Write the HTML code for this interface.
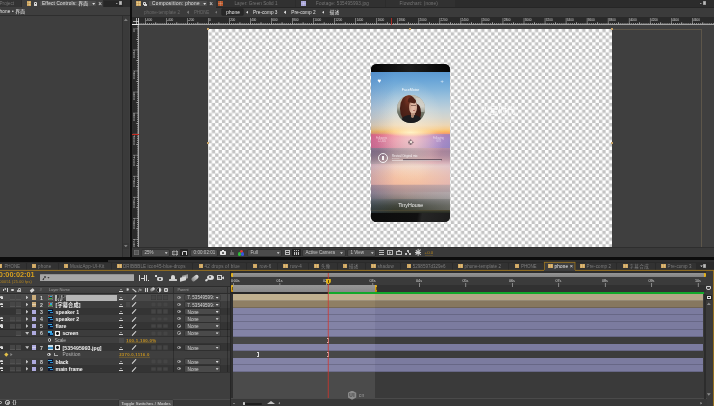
<!DOCTYPE html>
<html><head><meta charset="utf-8"><title>After Effects - phone</title>
<style>
html,body{margin:0;padding:0;background:#3e3e3e;}
#r{position:relative;width:714px;height:406px;overflow:hidden;background:#3e3e3e;font-family:"Liberation Sans","Noto Sans CJK SC",sans-serif;will-change:transform;}
#r div,#r span,#r svg{position:absolute;display:block;white-space:nowrap;}
</style></head><body><div id="r">
<div style="left:0.00px;top:0.00px;width:130.00px;height:257.50px;background:#3e3e3e;"></div>
<div style="left:0.00px;top:0.00px;width:130.00px;height:7.00px;background:#2c2c2c;"></div>
<div style="left:0.00px;top:0.00px;width:21.00px;height:6.60px;background:#333;"></div>
<span id="t0" style="left:-0.60px;top:0px;font-size:4.6px;line-height:8px;color:#777;font-weight:normal;letter-spacing:0.070px;">Project</span>
<div style="left:22.00px;top:0.00px;width:81.00px;height:8.00px;background:#3e3e3e;"></div>
<div style="left:26.50px;top:1.40px;width:4.50px;height:4.50px;background:#c8a868;"></div>
<div style="left:26.50px;top:1.40px;width:4.50px;height:4.50px;background:#e4c88c;"></div>
<div style="left:28px;top:1.40px;width:1px;height:4.50px;background:rgba(176,120,40,0.303);"></div>
<div style="left:29px;top:1.40px;width:1px;height:4.50px;background:rgba(176,120,40,0.028);"></div>
<div style="left:26.50px;top:3px;width:4.50px;height:1px;background:rgba(176,120,40,0.330);"></div>
<div style="left:26.50px;top:1.40px;width:4.5px;height:4.5px;box-shadow:inset 0 0 0 0.5px rgba(176,120,40,.55);"></div>
<div style="left:34.30px;top:3.80px;width:3.20px;height:2.10px;background:#d6d6d6;border-radius:0.3px;"></div>
<div style="left:33.60px;top:2.20px;width:1.0px;height:1.8px;border:0.6px solid #d6d6d6;border-bottom:none;border-radius:1.1px 1.1px 0 0;"></div>
<div style="left:40.00px;top:0.60px;width:56.00px;height:5.60px;background:#4c4c4c;border-radius:0.8px;"></div>
<span id="t1" style="left:42.00px;top:0px;font-size:4.7px;line-height:8px;color:#e6e6e6;font-weight:normal;letter-spacing:0.177px;">Effect Controls: 界面</span>
<div style="left:92.00px;top:2.80px;width:3.40px;height:2.12px;background:#ddd;clip-path:polygon(0 0,100% 0,50% 100%);"></div>
<span id="t2" style="left:98.20px;top:0px;font-size:6.4px;line-height:8px;color:#e0e0e0;font-weight:normal;">×</span>
<div style="left:103.50px;top:0.50px;width:19.00px;height:6.00px;background:#262626;"></div>
<div style="left:115.50px;top:2.50px;width:2.60px;height:1.62px;background:#ddd;clip-path:polygon(0 0,100% 0,50% 100%);"></div>
<div style="left:118.50px;top:1.30px;width:3.00px;height:4.00px;background:#bdbdbd;box-shadow:inset 0 0 0 0.5px #888;"></div>
<span id="t3" style="left:-0.50px;top:8px;font-size:4.7px;line-height:8px;color:#e6e6e6;font-weight:normal;letter-spacing:0.160px;">hone • 界面</span>
<div style="left:0.00px;top:15.40px;width:130.00px;height:0.90px;background:#2e2e2e;"></div>
<div style="left:122.20px;top:16.30px;width:7.20px;height:241.00px;background:#3a3a3a;"></div>
<div style="left:122.20px;top:16.30px;width:0.60px;height:241.00px;background:#2f2f2f;"></div>
<div style="left:123.80px;top:18.40px;width:4.00px;height:2.70px;background:#7c7c7c;clip-path:polygon(0 100%,100% 100%,50% 0);"></div>
<div style="left:122.80px;top:243.00px;width:6.60px;height:6.40px;background:#363636;"></div>
<div style="left:123.80px;top:244.80px;width:4.00px;height:2.70px;background:#7c7c7c;clip-path:polygon(0 0,100% 0,50% 100%);"></div>
<div style="left:129.60px;top:0.00px;width:2.00px;height:258.00px;background:#0f0f0f;"></div>
<div style="left:131.60px;top:0.00px;width:582.40px;height:257.50px;background:#3e3e3e;"></div>
<div style="left:131.60px;top:0.00px;width:582.40px;height:7.00px;background:#2c2c2c;"></div>
<div style="left:131.60px;top:0.00px;width:84.00px;height:8.00px;background:#3c3c3c;"></div>
<div style="left:136.30px;top:1.40px;width:4.50px;height:4.50px;background:#c8a868;"></div>
<div style="left:136.30px;top:1.40px;width:4.50px;height:4.50px;background:#e4c88c;"></div>
<div style="left:138px;top:1.40px;width:1px;height:4.50px;background:rgba(176,120,40,0.330);"></div>
<div style="left:136.30px;top:3px;width:4.50px;height:1px;background:rgba(176,120,40,0.330);"></div>
<div style="left:136.30px;top:1.40px;width:4.5px;height:4.5px;box-shadow:inset 0 0 0 0.5px rgba(176,120,40,.55);"></div>
<div style="left:143.70px;top:3.80px;width:3.20px;height:2.10px;background:#d6d6d6;border-radius:0.3px;"></div>
<div style="left:143.00px;top:2.20px;width:1.0px;height:1.8px;border:0.6px solid #d6d6d6;border-bottom:none;border-radius:1.1px 1.1px 0 0;"></div>
<div style="left:149.00px;top:0.60px;width:58.00px;height:5.60px;background:#4c4c4c;border-radius:0.8px;"></div>
<span id="t4" style="left:152.00px;top:0px;font-size:4.7px;line-height:8px;color:#e6e6e6;font-weight:normal;letter-spacing:0.350px;">Composition: phone</span>
<div style="left:203.00px;top:2.80px;width:3.40px;height:2.12px;background:#ddd;clip-path:polygon(0 0,100% 0,50% 100%);"></div>
<span id="t5" style="left:209.20px;top:0px;font-size:6.4px;line-height:8px;color:#e0e0e0;font-weight:normal;">×</span>
<div style="left:216.20px;top:0.40px;width:78.80px;height:6.20px;background:#313131;"></div>
<div style="left:295.80px;top:0.40px;width:89.70px;height:6.20px;background:#313131;"></div>
<div style="left:386.30px;top:0.40px;width:68.70px;height:6.20px;background:#313131;"></div>
<div style="left:218.20px;top:1.40px;width:4.50px;height:4.50px;background:#b5562a;"></div>
<div style="left:220px;top:1.40px;width:1px;height:4.50px;background:rgba(255,255,255,0.180);"></div>
<div style="left:218.20px;top:3px;width:4.50px;height:1px;background:rgba(255,255,255,0.180);"></div>
<span id="t6" style="left:234.50px;top:0px;font-size:4.6px;line-height:8px;color:#777;font-weight:normal;letter-spacing:0.043px;">Layer: Green Solid 1</span>
<div style="left:301.40px;top:1.40px;width:4.50px;height:4.50px;background:#a9a5d8;"></div>
<div style="left:303px;top:1.40px;width:1px;height:4.50px;background:rgba(255,255,255,0.180);"></div>
<div style="left:301.40px;top:3px;width:4.50px;height:1px;background:rgba(255,255,255,0.180);"></div>
<span id="t7" style="left:316.00px;top:0px;font-size:4.6px;line-height:8px;color:#777;font-weight:normal;letter-spacing:0.145px;">Footage: 535495993.jpg</span>
<span id="t8" style="left:399.60px;top:0px;font-size:4.6px;line-height:8px;color:#777;font-weight:normal;letter-spacing:0.155px;">Flowchart: (none)</span>
<div style="left:699.50px;top:2.50px;width:2.60px;height:1.62px;background:#ddd;clip-path:polygon(0 0,100% 0,50% 100%);"></div>
<div style="left:702.50px;top:1.30px;width:3.00px;height:4.00px;background:#bdbdbd;box-shadow:inset 0 0 0 0.5px #888;"></div>
<div style="left:131.60px;top:6.80px;width:582.40px;height:0.70px;background:#262626;"></div>
<div style="left:131.60px;top:0.00px;width:84.00px;height:8.00px;background:#3c3c3c;"></div>
<div style="left:136.30px;top:1.40px;width:4.50px;height:4.50px;background:#c8a868;"></div>
<div style="left:136.30px;top:1.40px;width:4.50px;height:4.50px;background:#e4c88c;"></div>
<div style="left:138px;top:1.40px;width:1px;height:4.50px;background:rgba(176,120,40,0.330);"></div>
<div style="left:136.30px;top:3px;width:4.50px;height:1px;background:rgba(176,120,40,0.330);"></div>
<div style="left:136.30px;top:1.40px;width:4.5px;height:4.5px;box-shadow:inset 0 0 0 0.5px rgba(176,120,40,.55);"></div>
<div style="left:143.70px;top:3.80px;width:3.20px;height:2.10px;background:#d6d6d6;border-radius:0.3px;"></div>
<div style="left:143.00px;top:2.20px;width:1.0px;height:1.8px;border:0.6px solid #d6d6d6;border-bottom:none;border-radius:1.1px 1.1px 0 0;"></div>
<div style="left:149.00px;top:0.60px;width:58.00px;height:5.60px;background:#4c4c4c;border-radius:0.8px;"></div>
<span id="t9" style="left:152.00px;top:0px;font-size:4.7px;line-height:8px;color:#e6e6e6;font-weight:normal;letter-spacing:0.350px;">Composition: phone</span>
<div style="left:203.00px;top:2.80px;width:3.40px;height:2.12px;background:#ddd;clip-path:polygon(0 0,100% 0,50% 100%);"></div>
<span id="t10" style="left:209.20px;top:0px;font-size:6.4px;line-height:8px;color:#e0e0e0;font-weight:normal;">×</span>
<div style="left:131.60px;top:7.50px;width:582.40px;height:9.70px;background:#3b3b3b;"></div>
<span id="t11" style="left:144.00px;top:9px;font-size:4.6px;line-height:8px;color:#6a6a6a;font-weight:normal;letter-spacing:0.015px;">phone-template 2</span>
<div style="left:186.60px;top:10.40px;width:2.43px;height:3.60px;background:#777;clip-path:polygon(100% 0,0 50%,100% 100%);"></div>
<span id="t12" style="left:194.00px;top:9px;font-size:4.6px;line-height:8px;color:#6a6a6a;font-weight:normal;letter-spacing:-0.269px;">PHONE</span>
<div style="left:215.00px;top:10.40px;width:2.43px;height:3.60px;background:#777;clip-path:polygon(100% 0,0 50%,100% 100%);"></div>
<div style="left:222.40px;top:8.80px;width:21.00px;height:6.70px;background:#272727;border-radius:0.5px;box-shadow:0 0 0 0.5px #1c1c1c;"></div>
<span id="t13" style="left:226.30px;top:9px;font-size:4.7px;line-height:8px;color:#f0f0f0;font-weight:normal;letter-spacing:0.131px;">phone</span>
<div style="left:246.00px;top:10.40px;width:2.43px;height:3.60px;background:#ddd;clip-path:polygon(100% 0,0 50%,100% 100%);"></div>
<span id="t14" style="left:253.00px;top:9px;font-size:4.7px;line-height:8px;color:#e0e0e0;font-weight:normal;letter-spacing:0.027px;">Pre-comp 3</span>
<div style="left:283.60px;top:10.40px;width:2.43px;height:3.60px;background:#ddd;clip-path:polygon(100% 0,0 50%,100% 100%);"></div>
<span id="t15" style="left:291.30px;top:9px;font-size:4.7px;line-height:8px;color:#e0e0e0;font-weight:normal;letter-spacing:-0.003px;">Pre-comp 2</span>
<div style="left:322.00px;top:10.40px;width:2.43px;height:3.60px;background:#ddd;clip-path:polygon(100% 0,0 50%,100% 100%);"></div>
<span id="t16" style="left:329.40px;top:9px;font-size:4.7px;line-height:8px;color:#e0e0e0;font-weight:normal;letter-spacing:0.305px;">描述</span>
<div style="left:131.60px;top:17.30px;width:582.40px;height:7.90px;background:#2a2a2a;"></div>
<div style="left:131.60px;top:25.20px;width:7.60px;height:222.30px;background:#2a2a2a;"></div>
<div style="left:139.20px;top:25.20px;width:574.80px;height:222.30px;background:#3f3f3f;"></div>
<div style="left:139px;top:23px;width:575px;height:1px;background:repeating-linear-gradient(90deg,rgba(230,230,230,.55) -0.032px,rgba(230,230,230,0) 1.020px,rgba(230,230,230,.55) 2.072px);"></div>
<div style="left:139.00px;top:24px;width:575.00px;height:1px;background:rgba(232,232,232,0.640);"></div>
<div style="left:144px;top:18.00px;width:1px;height:6.00px;background:rgba(215,215,215,0.015);"></div>
<div style="left:145px;top:18.00px;width:1px;height:6.00px;background:rgba(215,215,215,0.435);"></div>
<span id="t17" style="left:145.98px;top:16px;font-size:3.1px;line-height:8px;color:#d8d8d8;font-weight:normal;">-600</span>
<div style="left:155px;top:22.00px;width:1px;height:2.00px;background:rgba(225,225,225,0.350);"></div>
<div style="left:156px;top:22.00px;width:1px;height:2.00px;background:rgba(225,225,225,0.070);"></div>
<div style="left:166px;top:18.00px;width:1px;height:6.00px;background:rgba(215,215,215,0.450);"></div>
<span id="t18" style="left:167.02px;top:16px;font-size:3.1px;line-height:8px;color:#d8d8d8;font-weight:normal;">-400</span>
<div style="left:176px;top:22.00px;width:1px;height:2.00px;background:rgba(225,225,225,0.322);"></div>
<div style="left:177px;top:22.00px;width:1px;height:2.00px;background:rgba(225,225,225,0.098);"></div>
<div style="left:187px;top:18.00px;width:1px;height:6.00px;background:rgba(215,215,215,0.450);"></div>
<span id="t19" style="left:188.06px;top:16px;font-size:3.1px;line-height:8px;color:#d8d8d8;font-weight:normal;">-200</span>
<div style="left:197px;top:22.00px;width:1px;height:2.00px;background:rgba(225,225,225,0.294);"></div>
<div style="left:198px;top:22.00px;width:1px;height:2.00px;background:rgba(225,225,225,0.126);"></div>
<div style="left:208px;top:18.00px;width:1px;height:6.00px;background:rgba(215,215,215,0.450);"></div>
<span id="t20" style="left:209.10px;top:16px;font-size:3.1px;line-height:8px;color:#d8d8d8;font-weight:normal;">0</span>
<div style="left:218px;top:22.00px;width:1px;height:2.00px;background:rgba(225,225,225,0.266);"></div>
<div style="left:219px;top:22.00px;width:1px;height:2.00px;background:rgba(225,225,225,0.154);"></div>
<div style="left:229px;top:18.00px;width:1px;height:6.00px;background:rgba(215,215,215,0.450);"></div>
<span id="t21" style="left:230.14px;top:16px;font-size:3.1px;line-height:8px;color:#d8d8d8;font-weight:normal;">200</span>
<div style="left:239px;top:22.00px;width:1px;height:2.00px;background:rgba(225,225,225,0.238);"></div>
<div style="left:240px;top:22.00px;width:1px;height:2.00px;background:rgba(225,225,225,0.182);"></div>
<div style="left:250px;top:18.00px;width:1px;height:6.00px;background:rgba(215,215,215,0.450);"></div>
<span id="t22" style="left:251.18px;top:16px;font-size:3.1px;line-height:8px;color:#d8d8d8;font-weight:normal;">400</span>
<div style="left:260px;top:22.00px;width:1px;height:2.00px;background:rgba(225,225,225,0.210);"></div>
<div style="left:261px;top:22.00px;width:1px;height:2.00px;background:rgba(225,225,225,0.210);"></div>
<div style="left:271px;top:18.00px;width:1px;height:6.00px;background:rgba(215,215,215,0.450);"></div>
<span id="t23" style="left:272.22px;top:16px;font-size:3.1px;line-height:8px;color:#d8d8d8;font-weight:normal;">600</span>
<div style="left:281px;top:22.00px;width:1px;height:2.00px;background:rgba(225,225,225,0.182);"></div>
<div style="left:282px;top:22.00px;width:1px;height:2.00px;background:rgba(225,225,225,0.238);"></div>
<div style="left:292px;top:18.00px;width:1px;height:6.00px;background:rgba(215,215,215,0.450);"></div>
<span id="t24" style="left:293.26px;top:16px;font-size:3.1px;line-height:8px;color:#d8d8d8;font-weight:normal;">800</span>
<div style="left:302px;top:22.00px;width:1px;height:2.00px;background:rgba(225,225,225,0.154);"></div>
<div style="left:303px;top:22.00px;width:1px;height:2.00px;background:rgba(225,225,225,0.266);"></div>
<div style="left:313px;top:18.00px;width:1px;height:6.00px;background:rgba(215,215,215,0.450);"></div>
<span id="t25" style="left:314.30px;top:16px;font-size:3.1px;line-height:8px;color:#d8d8d8;font-weight:normal;">1000</span>
<div style="left:323px;top:22.00px;width:1px;height:2.00px;background:rgba(225,225,225,0.126);"></div>
<div style="left:324px;top:22.00px;width:1px;height:2.00px;background:rgba(225,225,225,0.294);"></div>
<div style="left:334px;top:18.00px;width:1px;height:6.00px;background:rgba(215,215,215,0.450);"></div>
<span id="t26" style="left:335.34px;top:16px;font-size:3.1px;line-height:8px;color:#d8d8d8;font-weight:normal;">1200</span>
<div style="left:344px;top:22.00px;width:1px;height:2.00px;background:rgba(225,225,225,0.098);"></div>
<div style="left:345px;top:22.00px;width:1px;height:2.00px;background:rgba(225,225,225,0.322);"></div>
<div style="left:355px;top:18.00px;width:1px;height:6.00px;background:rgba(215,215,215,0.450);"></div>
<span id="t27" style="left:356.38px;top:16px;font-size:3.1px;line-height:8px;color:#d8d8d8;font-weight:normal;">1400</span>
<div style="left:365px;top:22.00px;width:1px;height:2.00px;background:rgba(225,225,225,0.070);"></div>
<div style="left:366px;top:22.00px;width:1px;height:2.00px;background:rgba(225,225,225,0.350);"></div>
<div style="left:376px;top:18.00px;width:1px;height:6.00px;background:rgba(215,215,215,0.435);"></div>
<div style="left:377px;top:18.00px;width:1px;height:6.00px;background:rgba(215,215,215,0.015);"></div>
<span id="t28" style="left:377.42px;top:16px;font-size:3.1px;line-height:8px;color:#d8d8d8;font-weight:normal;">1600</span>
<div style="left:386px;top:22.00px;width:1px;height:2.00px;background:rgba(225,225,225,0.042);"></div>
<div style="left:387px;top:22.00px;width:1px;height:2.00px;background:rgba(225,225,225,0.378);"></div>
<div style="left:397px;top:18.00px;width:1px;height:6.00px;background:rgba(215,215,215,0.405);"></div>
<div style="left:398px;top:18.00px;width:1px;height:6.00px;background:rgba(215,215,215,0.045);"></div>
<span id="t29" style="left:398.46px;top:16px;font-size:3.1px;line-height:8px;color:#d8d8d8;font-weight:normal;">1800</span>
<div style="left:407px;top:22.00px;width:1px;height:2.00px;background:rgba(225,225,225,0.014);"></div>
<div style="left:408px;top:22.00px;width:1px;height:2.00px;background:rgba(225,225,225,0.406);"></div>
<div style="left:418px;top:18.00px;width:1px;height:6.00px;background:rgba(215,215,215,0.375);"></div>
<div style="left:419px;top:18.00px;width:1px;height:6.00px;background:rgba(215,215,215,0.075);"></div>
<span id="t30" style="left:419.50px;top:16px;font-size:3.1px;line-height:8px;color:#d8d8d8;font-weight:normal;">2000</span>
<div style="left:429px;top:22.00px;width:1px;height:2.00px;background:rgba(225,225,225,0.420);"></div>
<div style="left:439px;top:18.00px;width:1px;height:6.00px;background:rgba(215,215,215,0.345);"></div>
<div style="left:440px;top:18.00px;width:1px;height:6.00px;background:rgba(215,215,215,0.105);"></div>
<span id="t31" style="left:440.54px;top:16px;font-size:3.1px;line-height:8px;color:#d8d8d8;font-weight:normal;">2200</span>
<div style="left:450px;top:22.00px;width:1px;height:2.00px;background:rgba(225,225,225,0.420);"></div>
<div style="left:460px;top:18.00px;width:1px;height:6.00px;background:rgba(215,215,215,0.315);"></div>
<div style="left:461px;top:18.00px;width:1px;height:6.00px;background:rgba(215,215,215,0.135);"></div>
<span id="t32" style="left:461.58px;top:16px;font-size:3.1px;line-height:8px;color:#d8d8d8;font-weight:normal;">2400</span>
<div style="left:471px;top:22.00px;width:1px;height:2.00px;background:rgba(225,225,225,0.420);"></div>
<div style="left:481px;top:18.00px;width:1px;height:6.00px;background:rgba(215,215,215,0.285);"></div>
<div style="left:482px;top:18.00px;width:1px;height:6.00px;background:rgba(215,215,215,0.165);"></div>
<span id="t33" style="left:482.62px;top:16px;font-size:3.1px;line-height:8px;color:#d8d8d8;font-weight:normal;">2600</span>
<div style="left:492px;top:22.00px;width:1px;height:2.00px;background:rgba(225,225,225,0.420);"></div>
<div style="left:502px;top:18.00px;width:1px;height:6.00px;background:rgba(215,215,215,0.255);"></div>
<div style="left:503px;top:18.00px;width:1px;height:6.00px;background:rgba(215,215,215,0.195);"></div>
<span id="t34" style="left:503.66px;top:16px;font-size:3.1px;line-height:8px;color:#d8d8d8;font-weight:normal;">2800</span>
<div style="left:513px;top:22.00px;width:1px;height:2.00px;background:rgba(225,225,225,0.420);"></div>
<div style="left:523px;top:18.00px;width:1px;height:6.00px;background:rgba(215,215,215,0.225);"></div>
<div style="left:524px;top:18.00px;width:1px;height:6.00px;background:rgba(215,215,215,0.225);"></div>
<span id="t35" style="left:524.70px;top:16px;font-size:3.1px;line-height:8px;color:#d8d8d8;font-weight:normal;">3000</span>
<div style="left:534px;top:22.00px;width:1px;height:2.00px;background:rgba(225,225,225,0.420);"></div>
<div style="left:544px;top:18.00px;width:1px;height:6.00px;background:rgba(215,215,215,0.195);"></div>
<div style="left:545px;top:18.00px;width:1px;height:6.00px;background:rgba(215,215,215,0.255);"></div>
<span id="t36" style="left:545.74px;top:16px;font-size:3.1px;line-height:8px;color:#d8d8d8;font-weight:normal;">3200</span>
<div style="left:555px;top:22.00px;width:1px;height:2.00px;background:rgba(225,225,225,0.420);"></div>
<div style="left:565px;top:18.00px;width:1px;height:6.00px;background:rgba(215,215,215,0.165);"></div>
<div style="left:566px;top:18.00px;width:1px;height:6.00px;background:rgba(215,215,215,0.285);"></div>
<span id="t37" style="left:566.78px;top:16px;font-size:3.1px;line-height:8px;color:#d8d8d8;font-weight:normal;">3400</span>
<div style="left:576px;top:22.00px;width:1px;height:2.00px;background:rgba(225,225,225,0.420);"></div>
<div style="left:586px;top:18.00px;width:1px;height:6.00px;background:rgba(215,215,215,0.135);"></div>
<div style="left:587px;top:18.00px;width:1px;height:6.00px;background:rgba(215,215,215,0.315);"></div>
<span id="t38" style="left:587.82px;top:16px;font-size:3.1px;line-height:8px;color:#d8d8d8;font-weight:normal;">3600</span>
<div style="left:597px;top:22.00px;width:1px;height:2.00px;background:rgba(225,225,225,0.420);"></div>
<div style="left:607px;top:18.00px;width:1px;height:6.00px;background:rgba(215,215,215,0.105);"></div>
<div style="left:608px;top:18.00px;width:1px;height:6.00px;background:rgba(215,215,215,0.345);"></div>
<span id="t39" style="left:608.86px;top:16px;font-size:3.1px;line-height:8px;color:#d8d8d8;font-weight:normal;">3800</span>
<div style="left:618px;top:22.00px;width:1px;height:2.00px;background:rgba(225,225,225,0.420);"></div>
<div style="left:628px;top:18.00px;width:1px;height:6.00px;background:rgba(215,215,215,0.075);"></div>
<div style="left:629px;top:18.00px;width:1px;height:6.00px;background:rgba(215,215,215,0.375);"></div>
<span id="t40" style="left:629.90px;top:16px;font-size:3.1px;line-height:8px;color:#d8d8d8;font-weight:normal;">4000</span>
<div style="left:639px;top:22.00px;width:1px;height:2.00px;background:rgba(225,225,225,0.406);"></div>
<div style="left:640px;top:22.00px;width:1px;height:2.00px;background:rgba(225,225,225,0.014);"></div>
<div style="left:649px;top:18.00px;width:1px;height:6.00px;background:rgba(215,215,215,0.045);"></div>
<div style="left:650px;top:18.00px;width:1px;height:6.00px;background:rgba(215,215,215,0.405);"></div>
<span id="t41" style="left:650.94px;top:16px;font-size:3.1px;line-height:8px;color:#d8d8d8;font-weight:normal;">4200</span>
<div style="left:660px;top:22.00px;width:1px;height:2.00px;background:rgba(225,225,225,0.378);"></div>
<div style="left:661px;top:22.00px;width:1px;height:2.00px;background:rgba(225,225,225,0.042);"></div>
<div style="left:671px;top:18.00px;width:1px;height:6.00px;background:rgba(215,215,215,0.435);"></div>
<span id="t42" style="left:671.98px;top:16px;font-size:3.1px;line-height:8px;color:#d8d8d8;font-weight:normal;">4400</span>
<div style="left:681px;top:22.00px;width:1px;height:2.00px;background:rgba(225,225,225,0.350);"></div>
<div style="left:682px;top:22.00px;width:1px;height:2.00px;background:rgba(225,225,225,0.070);"></div>
<div style="left:692px;top:18.00px;width:1px;height:6.00px;background:rgba(215,215,215,0.450);"></div>
<span id="t43" style="left:693.02px;top:16px;font-size:3.1px;line-height:8px;color:#d8d8d8;font-weight:normal;">4600</span>
<div style="left:702px;top:22.00px;width:1px;height:2.00px;background:rgba(225,225,225,0.322);"></div>
<div style="left:703px;top:22.00px;width:1px;height:2.00px;background:rgba(225,225,225,0.098);"></div>
<div style="left:137px;top:25px;width:1px;height:222.5px;background:repeating-linear-gradient(180deg,rgba(230,230,230,.55) -0.308px,rgba(230,230,230,0) 0.744px,rgba(230,230,230,.55) 1.796px);"></div>
<div style="left:138px;top:25.00px;width:1px;height:222.50px;background:rgba(232,232,232,0.640);"></div>
<div style="left:133.00px;top:28px;width:5.40px;height:1px;background:rgba(215,215,215,0.240);"></div>
<div style="left:133.00px;top:29px;width:5.40px;height:1px;background:rgba(215,215,215,0.120);"></div>
<span style="left:132.5px;top:29.50px;width:3px;text-align:center;font-size:3.1px;line-height:2.75px;color:#cfcfcf;">0</span>
<div style="left:136.00px;top:39px;width:2.00px;height:1px;background:rgba(225,225,225,0.420);"></div>
<div style="left:133.00px;top:49px;width:5.40px;height:1px;background:rgba(215,215,215,0.216);"></div>
<div style="left:133.00px;top:50px;width:5.40px;height:1px;background:rgba(215,215,215,0.144);"></div>
<span style="left:132.5px;top:50.54px;width:3px;text-align:center;font-size:3.1px;line-height:2.75px;color:#cfcfcf;">2<br>0<br>0</span>
<div style="left:136.00px;top:60px;width:2.00px;height:1px;background:rgba(225,225,225,0.420);"></div>
<div style="left:133.00px;top:70px;width:5.40px;height:1px;background:rgba(215,215,215,0.192);"></div>
<div style="left:133.00px;top:71px;width:5.40px;height:1px;background:rgba(215,215,215,0.168);"></div>
<span style="left:132.5px;top:71.58px;width:3px;text-align:center;font-size:3.1px;line-height:2.75px;color:#cfcfcf;">4<br>0<br>0</span>
<div style="left:136.00px;top:81px;width:2.00px;height:1px;background:rgba(225,225,225,0.420);"></div>
<div style="left:133.00px;top:91px;width:5.40px;height:1px;background:rgba(215,215,215,0.168);"></div>
<div style="left:133.00px;top:92px;width:5.40px;height:1px;background:rgba(215,215,215,0.192);"></div>
<span style="left:132.5px;top:92.62px;width:3px;text-align:center;font-size:3.1px;line-height:2.75px;color:#cfcfcf;">6<br>0<br>0</span>
<div style="left:136.00px;top:102px;width:2.00px;height:1px;background:rgba(225,225,225,0.420);"></div>
<div style="left:133.00px;top:112px;width:5.40px;height:1px;background:rgba(215,215,215,0.144);"></div>
<div style="left:133.00px;top:113px;width:5.40px;height:1px;background:rgba(215,215,215,0.216);"></div>
<span style="left:132.5px;top:113.66px;width:3px;text-align:center;font-size:3.1px;line-height:2.75px;color:#cfcfcf;">8<br>0<br>0</span>
<div style="left:136.00px;top:123px;width:2.00px;height:1px;background:rgba(225,225,225,0.420);"></div>
<div style="left:133.00px;top:133px;width:5.40px;height:1px;background:rgba(215,215,215,0.120);"></div>
<div style="left:133.00px;top:134px;width:5.40px;height:1px;background:rgba(215,215,215,0.240);"></div>
<span style="left:132.5px;top:134.70px;width:3px;text-align:center;font-size:3.1px;line-height:2.75px;color:#cfcfcf;">1<br>0<br>0<br>0</span>
<div style="left:136.00px;top:144px;width:2.00px;height:1px;background:rgba(225,225,225,0.420);"></div>
<div style="left:133.00px;top:154px;width:5.40px;height:1px;background:rgba(215,215,215,0.096);"></div>
<div style="left:133.00px;top:155px;width:5.40px;height:1px;background:rgba(215,215,215,0.264);"></div>
<span style="left:132.5px;top:155.74px;width:3px;text-align:center;font-size:3.1px;line-height:2.75px;color:#cfcfcf;">1<br>2<br>0<br>0</span>
<div style="left:136.00px;top:165px;width:2.00px;height:1px;background:rgba(225,225,225,0.420);"></div>
<div style="left:133.00px;top:175px;width:5.40px;height:1px;background:rgba(215,215,215,0.072);"></div>
<div style="left:133.00px;top:176px;width:5.40px;height:1px;background:rgba(215,215,215,0.288);"></div>
<span style="left:132.5px;top:176.78px;width:3px;text-align:center;font-size:3.1px;line-height:2.75px;color:#cfcfcf;">1<br>4<br>0<br>0</span>
<div style="left:136.00px;top:186px;width:2.00px;height:1px;background:rgba(225,225,225,0.420);"></div>
<div style="left:133.00px;top:196px;width:5.40px;height:1px;background:rgba(215,215,215,0.048);"></div>
<div style="left:133.00px;top:197px;width:5.40px;height:1px;background:rgba(215,215,215,0.312);"></div>
<span style="left:132.5px;top:197.82px;width:3px;text-align:center;font-size:3.1px;line-height:2.75px;color:#cfcfcf;">1<br>6<br>0<br>0</span>
<div style="left:136.00px;top:207px;width:2.00px;height:1px;background:rgba(225,225,225,0.392);"></div>
<div style="left:136.00px;top:208px;width:2.00px;height:1px;background:rgba(225,225,225,0.028);"></div>
<div style="left:133.00px;top:217px;width:5.40px;height:1px;background:rgba(215,215,215,0.024);"></div>
<div style="left:133.00px;top:218px;width:5.40px;height:1px;background:rgba(215,215,215,0.336);"></div>
<span style="left:132.5px;top:218.86px;width:3px;text-align:center;font-size:3.1px;line-height:2.75px;color:#cfcfcf;">1<br>8<br>0<br>0</span>
<div style="left:136.00px;top:228px;width:2.00px;height:1px;background:rgba(225,225,225,0.364);"></div>
<div style="left:136.00px;top:229px;width:2.00px;height:1px;background:rgba(225,225,225,0.056);"></div>
<div style="left:133.00px;top:239px;width:5.40px;height:1px;background:rgba(215,215,215,0.360);"></div>
<span style="left:132.5px;top:239.90px;width:3px;text-align:center;font-size:3.1px;line-height:2.75px;color:#cfcfcf;">2<br>0<br>0<br>0</span>
<div style="left:131.60px;top:17.30px;width:7.60px;height:7.90px;background:#2a2a2a;"></div>
<div style="left:132.60px;top:21.20px;width:6.20px;height:0.50px;background:rgba(220,220,220,.7);"></div>
<div style="left:135.60px;top:18.20px;width:0.50px;height:6.40px;background:rgba(220,220,220,.7);"></div>
<div style="left:132.00px;top:24.20px;width:7.40px;height:0.80px;background:#ececec;"></div>
<div style="left:138.00px;top:17.80px;width:0.80px;height:7.20px;background:rgba(236,236,236,.8);"></div>
<div style="left:391px;top:18.00px;width:1px;height:6.80px;background:rgba(205,45,35,0.760);"></div>
<div style="left:132.40px;top:133.60px;width:6.40px;height:0.80px;background:#c8281e;"></div>
<svg width="404.00" height="218.60" viewBox="0 0 404.00 218.60" style="left:208.3px;top:28.9px;"><defs><pattern id="ck" x="0.45" y="-0.15" width="6.732" height="6.732" patternUnits="userSpaceOnUse"><rect width="6.732" height="6.732" fill="#ffffff"/><rect x="3.366" width="3.366" height="3.366" fill="#c4c4c4"/><rect y="3.366" width="3.366" height="3.366" fill="#c4c4c4"/></pattern></defs><rect width="404.00" height="218.60" fill="url(#ck)"/></svg>
<div style="left:612.40px;top:28.70px;width:88.60px;height:0.60px;background:#5d564a;"></div>
<div style="left:700.60px;top:28.70px;width:0.60px;height:218.80px;background:#5d564a;"></div>
<div style="left:207.30px;top:27.80px;width:2.20px;height:2.20px;background:#c9a56a;"></div>
<div style="left:409.30px;top:27.80px;width:2.20px;height:2.20px;background:#c9a56a;"></div>
<div style="left:611.30px;top:27.80px;width:2.20px;height:2.20px;background:#c9a56a;"></div>
<div style="left:207.30px;top:142.10px;width:2.20px;height:2.20px;background:#c9a56a;"></div>
<div style="left:611.30px;top:142.10px;width:2.20px;height:2.20px;background:#c9a56a;"></div>
<div style="left:371.0px;top:63.5px;width:79.0px;height:158.0px;border-radius:5.5px;overflow:hidden;background:#0a0a0a;">
<div style="left:0;top:0;width:79.0px;height:9px;background:linear-gradient(90deg,#050505 0%,#1c1c1c 50%,#050505 100%);"></div>
<div style="left:0;top:8.50px;width:79.0px;height:140.60px;background:linear-gradient(180deg,#5b99d1 0.00%,#69a5d7 5.69%,#83b5db 12.80%,#a4c5dc 19.91%,#c2d1d8 27.03%,#d6d5cc 32.72%,#ecd6b4 37.70%,#f6cc8c 40.54%,#fbb860 42.32%,#f29a72 43.74%,#e6809e 45.16%,#da8fb4 47.65%,#cf8fb4 50.50%,#c58cb0 53.49%,#a58296 54.20%,#917688 56.19%,#9c7f8c 59.03%,#b39396 61.88%,#dcbcb8 64.72%,#ecd2c8 66.86%,#f2cbb4 70.41%,#f4c4a6 74.68%,#f2bca0 79.52%,#bc9c9c 80.51%,#a89096 83.21%,#988c92 86.06%,#7c7a7c 88.90%,#5a5c58 91.75%,#44483f 94.59%,#383c30 97.44%,#4c4630 98.44%,#30342a 99.00%,#262a22 100.00%);"></div>
<div style="left:0;top:70.00px;width:79.0px;height:14.2px;background:linear-gradient(90deg,rgba(248,85,115,.6) 0%,rgba(255,160,150,.3) 42%,rgba(255,200,190,.25) 55%,rgba(150,140,215,.55) 82%,rgba(120,130,205,.6) 100%);"></div>
<div style="left:0;top:84.50px;width:79.0px;height:16px;background:linear-gradient(90deg,rgba(120,90,100,.25) 0%,rgba(0,0,0,0) 45%,rgba(240,170,190,.35) 75%,rgba(200,160,200,.3) 100%);"></div>
<div style="left:0;top:100.50px;width:79.0px;height:21px;background:linear-gradient(90deg,rgba(225,150,165,.32) 0%,rgba(255,205,160,.12) 40%,rgba(255,220,190,.1) 60%,rgba(205,175,205,.36) 100%);"></div>
<div style="left:0;top:121.50px;width:79.0px;height:14px;background:linear-gradient(90deg,rgba(140,100,110,.22) 0%,rgba(215,170,150,.3) 45%,rgba(200,190,190,.35) 100%);"></div>
<div style="left:14px;top:64.00px;width:52px;height:9px;background:radial-gradient(ellipse at 50% 50%,rgba(255,240,170,.95) 0%,rgba(255,225,150,.5) 40%,rgba(255,220,150,0) 72%);"></div>
<div style="left:0;top:8.50px;width:79.0px;height:140.60px;background:radial-gradient(ellipse 34px 52px at 50% 42%,rgba(255,246,228,.5) 0%,rgba(255,246,228,0) 100%);"></div>
<div style="left:0;top:8.50px;width:79.0px;height:140.60px;background:linear-gradient(90deg,rgba(40,80,160,.16) 0%,rgba(0,0,0,0) 30%,rgba(0,0,0,0) 100%);"></div>
<div style="left:0;top:128.50px;width:79.0px;height:18px;background:linear-gradient(90deg,rgba(190,185,185,0) 35%,rgba(190,185,185,.32) 100%);"></div>
<div style="left:0;top:149.10px;width:79.0px;height:10px;background:linear-gradient(100deg,#0c0c0c 0%,#101010 58%,#262626 64%,#1c1c1c 100%);"></div>
</div>
<div style="left:396.7px;top:95.1px;width:28px;height:28px;border-radius:50%;overflow:hidden;background:#8b9088;">
<div style="left:0;top:0;width:28px;height:28px;background:linear-gradient(180deg,#c2beb0 0%,#b6b3a6 42%,#74786a 60%,#4c5046 100%);"></div>
<div style="left:19px;top:3px;width:10px;height:13.5px;background:linear-gradient(180deg,#cbc9c0 0%,#d2d0c8 60%,#a4a69c 100%);"></div>
<div style="left:17px;top:9px;width:7.4px;height:16px;border-radius:40% 60% 50% 40%;background:#3c1b15;"></div>
<div style="left:3.8px;top:0.4px;width:17px;height:26px;border-radius:50% 50% 42% 46%;background:radial-gradient(ellipse at 45% 14%,#7c3625 0%,#56261a 30%,#3a1913 100%);"></div>
<div style="left:12.3px;top:5.6px;width:8.4px;height:13.6px;border-radius:42% 48% 50% 52%;background:linear-gradient(100deg,#a87a66 0%,#d9b19c 32%,#e2bca8 58%,#c59a85 100%);"></div>
<div style="left:11.4px;top:3.4px;width:8.4px;height:5.2px;border-radius:50% 60% 30% 20%;background:#4e2318;transform:rotate(14deg);"></div>
<div style="left:14px;top:18.2px;width:4px;height:4.6px;background:#b9917c;border-radius:0 0 40% 40%;"></div>
<div style="left:5.6px;top:20.4px;width:19px;height:9px;border-radius:46% 46% 0 0;background:#1c1c1f;"></div>
<div style="left:14.4px;top:20.2px;width:3.4px;height:2.6px;background:#a98470;border-radius:0 0 50% 50%;"></div>
<div style="left:14.2px;top:10.2px;width:5.6px;height:0.9px;background:rgba(70,40,32,.55);"></div>
<div style="left:16.2px;top:15.4px;width:2.6px;height:0.8px;background:rgba(150,70,60,.6);"></div>
</div>
<span id="t44" style="left:377.60px;top:77px;font-size:6.4px;line-height:8px;color:#ffffff;font-weight:normal;">♥</span>
<span id="t45" style="left:440.60px;top:77px;font-size:5.5px;line-height:8px;color:rgba(255,255,255,.75);font-weight:normal;">+</span>
<span id="t46" style="left:360.50px;width:100px;text-align:center;top:86px;font-size:3.6px;line-height:8px;color:rgba(255,255,255,.92);font-weight:normal;">FaceMoise</span>
<span id="t47" style="left:360.70px;width:100px;text-align:center;top:201px;font-size:5.3px;line-height:8px;color:rgba(255,255,255,.92);font-weight:normal;">TinyHouse</span>
<span id="t48" style="left:376.00px;top:135px;font-size:2.6px;line-height:8px;color:rgba(255,255,255,.6);font-weight:normal;">Followers</span>
<span id="t49" style="left:378.00px;top:138px;font-size:2.6px;line-height:8px;color:rgba(255,255,255,.6);font-weight:normal;">12,345</span>
<span id="t50" style="left:433.00px;top:135px;font-size:2.6px;line-height:8px;color:rgba(255,255,255,.6);font-weight:normal;">Following</span>
<span id="t51" style="left:436.50px;top:138px;font-size:2.6px;line-height:8px;color:rgba(255,255,255,.6);font-weight:normal;">678</span>
<div style="left:408.4px;top:139.8px;width:4.8px;height:4.8px;border-radius:50%;background:rgba(110,95,100,.5);"></div>
<div style="left:407.80px;top:141px;width:6.00px;height:1px;background:rgba(95,85,90,0.090);"></div>
<div style="left:407.80px;top:142px;width:6.00px;height:1px;background:rgba(95,85,90,0.450);"></div>
<div style="left:410px;top:139.20px;width:1px;height:6.00px;background:rgba(95,85,90,0.450);"></div>
<div style="left:411px;top:139.20px;width:1px;height:6.00px;background:rgba(95,85,90,0.090);"></div>
<div style="left:410.00px;top:141.40px;width:1.60px;height:1.60px;background:rgba(245,235,225,.9);"></div>
<div style="left:377.6px;top:152.8px;width:10.4px;height:10.4px;border-radius:50%;border:0.7px solid rgba(255,255,255,.85);box-sizing:border-box;"></div>
<div style="left:381.60px;top:156.20px;width:0.80px;height:3.60px;background:rgba(255,255,255,.9);"></div>
<div style="left:383.30px;top:156.20px;width:0.80px;height:3.60px;background:rgba(255,255,255,.9);"></div>
<span id="t52" style="left:392.00px;top:152px;font-size:2.9px;line-height:8px;color:rgba(255,255,255,.85);font-weight:normal;">Revival Original mix</span>
<span id="t53" style="left:392.00px;top:155px;font-size:2.4px;line-height:8px;color:rgba(255,255,255,.6);font-weight:normal;">Deorro</span>
<div style="left:392.00px;top:159.70px;width:49.00px;height:0.50px;background:rgba(255,255,255,.45);"></div>
<div style="left:403.00px;top:159px;width:38.50px;height:1px;background:rgba(80,66,80,0.765);"></div>
<div style="left:403.00px;top:160px;width:38.50px;height:1px;background:rgba(80,66,80,0.170);"></div>
<span id="t54" style="left:481.00px;top:107px;font-size:8.6px;line-height:8px;color:rgba(255,255,255,.85);font-weight:normal;">火星时代</span>
<span id="t55" style="left:483.50px;top:117px;font-size:3.6px;line-height:8px;color:rgba(255,255,255,.85);font-weight:normal;letter-spacing:0.628px;">www.hxsd.com</span>
<div style="left:131.60px;top:247.50px;width:582.40px;height:9.90px;background:#3a3a3a;"></div>
<div style="left:131.60px;top:247.40px;width:582.40px;height:0.50px;background:#2e2e2e;"></div>
<div style="left:133.60px;top:250.20px;width:5.40px;height:4.60px;background:#555;box-shadow:inset 0 0 0 0.6px #777;"></div>
<div style="left:141.80px;top:249.60px;width:27.40px;height:6.50px;background:#4b4b4b;border-radius:0.8px;box-shadow:0 0 0 0.4px #2c2c2c;"></div>
<span id="t56" style="left:144.40px;top:249px;font-size:4.5px;line-height:8px;color:#c8c8c8;font-weight:normal;">25%</span>
<div style="left:164.80px;top:252.30px;width:2.80px;height:1.75px;background:#d8d8d8;clip-path:polygon(0 0,100% 0,50% 100%);"></div>
<div style="left:172.2px;top:250.6px;width:5.6px;height:4.2px;box-shadow:inset 0 0 0 0.6px rgba(215,215,215,.85);"></div>
<div style="left:173px;top:249.80px;width:1px;height:6.00px;background:rgba(215,215,215,0.240);"></div>
<div style="left:174px;top:249.80px;width:1px;height:6.00px;background:rgba(215,215,215,0.160);"></div>
<div style="left:176px;top:249.80px;width:1px;height:6.00px;background:rgba(215,215,215,0.400);"></div>
<div style="left:180.20px;top:249.00px;width:8.20px;height:7.40px;background:#232323;border-radius:0.8px;"></div>
<div style="left:182.0px;top:250.6px;width:4.6px;height:4.2px;border:0.6px solid #d4d4d4;border-bottom:none;border-radius:1.5px 0 0 0;box-sizing:border-box;"></div>
<div style="left:191.40px;top:249.60px;width:26.00px;height:6.50px;background:#4b4b4b;border-radius:0.8px;box-shadow:0 0 0 0.4px #2c2c2c;"></div>
<span id="t57" style="left:193.60px;top:249px;font-size:4.5px;line-height:8px;color:#c2c2c2;font-weight:normal;letter-spacing:0.053px;">0:00:02:01</span>
<div style="left:220.40px;top:250.80px;width:5.80px;height:4.20px;background:#e2e2e2;border-radius:0.8px;"></div>
<div style="left:222.00px;top:249.90px;width:2.40px;height:1.20px;background:#e2e2e2;"></div>
<div style="left:222.1px;top:251.7px;width:2.4px;height:2.4px;border-radius:50%;background:#3a3a3a;"></div>
<div style="left:231.00px;top:250.00px;width:1.40px;height:2.60px;background:#6e6e6e;"></div>
<div style="left:229.80px;top:252.40px;width:3.80px;height:2.80px;background:#6e6e6e;border-radius:1.2px 1.2px 0 0;"></div>
<div style="left:239.6px;top:249.8px;width:3.2px;height:3.2px;border-radius:50%;background:#e03a2e;"></div>
<div style="left:237.8px;top:252.4px;width:3.2px;height:3.2px;border-radius:50%;background:#2fbf3a;"></div>
<div style="left:241.2px;top:252.4px;width:3.2px;height:3.2px;border-radius:50%;background:#3a55e0;"></div>
<div style="left:248.40px;top:249.60px;width:32.80px;height:6.50px;background:#4b4b4b;border-radius:0.8px;box-shadow:0 0 0 0.4px #2c2c2c;"></div>
<span id="t58" style="left:250.40px;top:249px;font-size:4.5px;line-height:8px;color:#c8c8c8;font-weight:normal;">Full</span>
<div style="left:276.80px;top:252.30px;width:2.80px;height:1.75px;background:#d8d8d8;clip-path:polygon(0 0,100% 0,50% 100%);"></div>
<div style="left:284.6px;top:250.4px;width:5.6px;height:4.6px;border:0.7px solid #bdbdbd;box-sizing:border-box;"></div>
<div style="left:286.40px;top:251.80px;width:3.60px;height:0.60px;background:#bdbdbd;"></div>
<div style="left:292.40px;top:249.00px;width:8.20px;height:7.40px;background:#232323;border-radius:0.8px;"></div>
<div style="left:294.0px;top:250.4px;width:5.2px;height:4.8px;background:#c4c4c4;background-image:linear-gradient(90deg,transparent 1.5px,#333 1.5px,#333 1.9px,transparent 1.9px,transparent 3.2px,#333 3.2px,#333 3.6px,transparent 3.6px),linear-gradient(180deg,transparent 1.4px,#333 1.4px,#333 1.8px,transparent 1.8px,transparent 3.0px,#333 3.0px,#333 3.4px,transparent 3.4px);"></div>
<div style="left:303.00px;top:249.60px;width:41.50px;height:6.50px;background:#4b4b4b;border-radius:0.8px;box-shadow:0 0 0 0.4px #2c2c2c;"></div>
<span id="t59" style="left:305.60px;top:249px;font-size:4.5px;line-height:8px;color:#c8c8c8;font-weight:normal;">Active Camera</span>
<div style="left:340.10px;top:252.30px;width:2.80px;height:1.75px;background:#d8d8d8;clip-path:polygon(0 0,100% 0,50% 100%);"></div>
<div style="left:347.60px;top:249.60px;width:27.70px;height:6.50px;background:#4b4b4b;border-radius:0.8px;box-shadow:0 0 0 0.4px #2c2c2c;"></div>
<span id="t60" style="left:350.60px;top:249px;font-size:4.5px;line-height:8px;color:#c8c8c8;font-weight:normal;">1 View</span>
<div style="left:370.90px;top:252.30px;width:2.80px;height:1.75px;background:#d8d8d8;clip-path:polygon(0 0,100% 0,50% 100%);"></div>
<div style="left:379.2px;top:250.2px;width:5.0px;height:5.0px;background:repeating-linear-gradient(180deg,#bcbcbc 0,#bcbcbc 1.1px,transparent 1.1px,transparent 1.9px);"></div>
<div style="left:387.2px;top:250.0px;width:5.8px;height:5.4px;border:0.7px solid #bcbcbc;box-sizing:border-box;"></div>
<div style="left:389.20px;top:251.30px;width:1.89px;height:2.80px;background:#c4c4c4;clip-path:polygon(0 0,100% 50%,0 100%);"></div>
<div style="left:396.2px;top:250.8px;width:6.0px;height:4.4px;border:0.7px solid #bcbcbc;box-sizing:border-box;"></div>
<div style="left:398.40px;top:249.80px;width:1.60px;height:1.20px;background:#bcbcbc;"></div>
<div style="left:407.20px;top:249.80px;width:2.20px;height:2.00px;background:#c4c4c4;"></div>
<div style="left:405.20px;top:253.20px;width:2.20px;height:2.00px;background:#c4c4c4;"></div>
<div style="left:409.20px;top:253.20px;width:2.20px;height:2.00px;background:#c4c4c4;"></div>
<div style="left:408.00px;top:251.60px;width:0.60px;height:1.80px;background:#c4c4c4;"></div>
<div style="left:416.2px;top:250.8px;width:3.6px;height:3.6px;border-radius:50%;background:#bcbcbc;"></div>
<div style="left:414.6px;top:252.35px;width:6.8px;height:0.5px;background:#cfcfcf;transform:rotate(0deg);"></div>
<div style="left:414.6px;top:252.35px;width:6.8px;height:0.5px;background:#cfcfcf;transform:rotate(45deg);"></div>
<div style="left:414.6px;top:252.35px;width:6.8px;height:0.5px;background:#cfcfcf;transform:rotate(90deg);"></div>
<div style="left:414.6px;top:252.35px;width:6.8px;height:0.5px;background:#cfcfcf;transform:rotate(135deg);"></div>
<span id="t61" style="left:424.60px;top:249px;font-size:4.4px;line-height:8px;color:#b8871e;font-weight:normal;letter-spacing:-0.020px;">+0.0</span>
<div style="left:424.60px;top:255px;width:8.60px;height:1px;background:rgba(184,135,30,0.250);"></div>
<div style="left:0.00px;top:257.40px;width:714.00px;height:2.20px;background:#0c0c0c;"></div>
<div style="left:0.00px;top:259.60px;width:108.00px;height:2.60px;background:#0c0c0c;"></div>
<div style="left:108.00px;top:259.60px;width:606.00px;height:2.60px;background:#303030;"></div>
<div style="left:0.00px;top:262.00px;width:714.00px;height:8.20px;background:#2a2a2a;"></div>
<div style="left:0.00px;top:262.60px;width:25.70px;height:7.00px;background:#323232;border-radius:0.8px 0.8px 0 0;"></div>
<div style="left:-2.40px;top:263.80px;width:4.50px;height:4.50px;background:#c6a56b;"></div>
<div style="left:-2.40px;top:263.80px;width:4.50px;height:4.50px;background:#e4c88c;"></div>
<div style="left:-1px;top:263.80px;width:1px;height:4.50px;background:rgba(176,120,40,0.247);"></div>
<div style="left:0px;top:263.80px;width:1px;height:4.50px;background:rgba(176,120,40,0.083);"></div>
<div style="left:-2.40px;top:265px;width:4.50px;height:1px;background:rgba(176,120,40,0.138);"></div>
<div style="left:-2.40px;top:266px;width:4.50px;height:1px;background:rgba(176,120,40,0.193);"></div>
<div style="left:-2.40px;top:263.80px;width:4.5px;height:4.5px;box-shadow:inset 0 0 0 0.5px rgba(176,120,40,.55);"></div>
<span id="t62" style="left:4.40px;top:263px;font-size:4.5px;line-height:8px;color:#7e7e7e;font-weight:normal;letter-spacing:-0.081px;">PHONE</span>
<div style="left:26.50px;top:262.60px;width:31.20px;height:7.00px;background:#323232;border-radius:0.8px 0.8px 0 0;"></div>
<div style="left:31.80px;top:263.80px;width:4.50px;height:4.50px;background:#c6a56b;"></div>
<div style="left:31.80px;top:263.80px;width:4.50px;height:4.50px;background:#e4c88c;"></div>
<div style="left:33px;top:263.80px;width:1px;height:4.50px;background:rgba(176,120,40,0.138);"></div>
<div style="left:34px;top:263.80px;width:1px;height:4.50px;background:rgba(176,120,40,0.193);"></div>
<div style="left:31.80px;top:265px;width:4.50px;height:1px;background:rgba(176,120,40,0.138);"></div>
<div style="left:31.80px;top:266px;width:4.50px;height:1px;background:rgba(176,120,40,0.193);"></div>
<div style="left:31.80px;top:263.80px;width:4.5px;height:4.5px;box-shadow:inset 0 0 0 0.5px rgba(176,120,40,.55);"></div>
<span id="t63" style="left:38.00px;top:263px;font-size:4.5px;line-height:8px;color:#7e7e7e;font-weight:normal;letter-spacing:0.197px;">phone</span>
<div style="left:58.50px;top:262.60px;width:52.70px;height:7.00px;background:#323232;border-radius:0.8px 0.8px 0 0;"></div>
<div style="left:63.60px;top:263.80px;width:4.50px;height:4.50px;background:#c6a56b;"></div>
<div style="left:63.60px;top:263.80px;width:4.50px;height:4.50px;background:#e4c88c;"></div>
<div style="left:65px;top:263.80px;width:1px;height:4.50px;background:rgba(176,120,40,0.248);"></div>
<div style="left:66px;top:263.80px;width:1px;height:4.50px;background:rgba(176,120,40,0.082);"></div>
<div style="left:63.60px;top:265px;width:4.50px;height:1px;background:rgba(176,120,40,0.138);"></div>
<div style="left:63.60px;top:266px;width:4.50px;height:1px;background:rgba(176,120,40,0.193);"></div>
<div style="left:63.60px;top:263.80px;width:4.5px;height:4.5px;box-shadow:inset 0 0 0 0.5px rgba(176,120,40,.55);"></div>
<span id="t64" style="left:70.00px;top:263px;font-size:4.5px;line-height:8px;color:#7e7e7e;font-weight:normal;letter-spacing:0.132px;">MusicApp-UI-Kit</span>
<div style="left:112.00px;top:262.60px;width:79.70px;height:7.00px;background:#323232;border-radius:0.8px 0.8px 0 0;"></div>
<div style="left:117.00px;top:263.80px;width:4.50px;height:4.50px;background:#c6a56b;"></div>
<div style="left:117.00px;top:263.80px;width:4.50px;height:4.50px;background:#e4c88c;"></div>
<div style="left:118px;top:263.80px;width:1px;height:4.50px;background:rgba(176,120,40,0.027);"></div>
<div style="left:119px;top:263.80px;width:1px;height:4.50px;background:rgba(176,120,40,0.302);"></div>
<div style="left:117.00px;top:265px;width:4.50px;height:1px;background:rgba(176,120,40,0.138);"></div>
<div style="left:117.00px;top:266px;width:4.50px;height:1px;background:rgba(176,120,40,0.193);"></div>
<div style="left:117.00px;top:263.80px;width:4.5px;height:4.5px;box-shadow:inset 0 0 0 0.5px rgba(176,120,40,.55);"></div>
<span id="t65" style="left:123.00px;top:263px;font-size:4.5px;line-height:8px;color:#7e7e7e;font-weight:normal;letter-spacing:0.118px;">DRIBBBLE icon45-blue-drops</span>
<div style="left:192.50px;top:262.60px;width:53.70px;height:7.00px;background:#323232;border-radius:0.8px 0.8px 0 0;"></div>
<div style="left:198.60px;top:263.80px;width:4.50px;height:4.50px;background:#c6a56b;"></div>
<div style="left:198.60px;top:263.80px;width:4.50px;height:4.50px;background:#e4c88c;"></div>
<div style="left:200px;top:263.80px;width:1px;height:4.50px;background:rgba(176,120,40,0.248);"></div>
<div style="left:201px;top:263.80px;width:1px;height:4.50px;background:rgba(176,120,40,0.082);"></div>
<div style="left:198.60px;top:265px;width:4.50px;height:1px;background:rgba(176,120,40,0.138);"></div>
<div style="left:198.60px;top:266px;width:4.50px;height:1px;background:rgba(176,120,40,0.193);"></div>
<div style="left:198.60px;top:263.80px;width:4.5px;height:4.5px;box-shadow:inset 0 0 0 0.5px rgba(176,120,40,.55);"></div>
<span id="t66" style="left:204.60px;top:263px;font-size:4.5px;line-height:8px;color:#7e7e7e;font-weight:normal;letter-spacing:0.194px;">42 drops of blue</span>
<div style="left:247.00px;top:262.60px;width:30.20px;height:7.00px;background:#323232;border-radius:0.8px 0.8px 0 0;"></div>
<div style="left:252.80px;top:263.80px;width:4.50px;height:4.50px;background:#c6a56b;"></div>
<div style="left:252.80px;top:263.80px;width:4.50px;height:4.50px;background:#e4c88c;"></div>
<div style="left:254px;top:263.80px;width:1px;height:4.50px;background:rgba(176,120,40,0.138);"></div>
<div style="left:255px;top:263.80px;width:1px;height:4.50px;background:rgba(176,120,40,0.192);"></div>
<div style="left:252.80px;top:265px;width:4.50px;height:1px;background:rgba(176,120,40,0.138);"></div>
<div style="left:252.80px;top:266px;width:4.50px;height:1px;background:rgba(176,120,40,0.193);"></div>
<div style="left:252.80px;top:263.80px;width:4.5px;height:4.5px;box-shadow:inset 0 0 0 0.5px rgba(176,120,40,.55);"></div>
<span id="t67" style="left:259.40px;top:263px;font-size:4.5px;line-height:8px;color:#7e7e7e;font-weight:normal;letter-spacing:0.147px;">row-6</span>
<div style="left:278.00px;top:262.60px;width:30.20px;height:7.00px;background:#323232;border-radius:0.8px 0.8px 0 0;"></div>
<div style="left:283.40px;top:263.80px;width:4.50px;height:4.50px;background:#c6a56b;"></div>
<div style="left:283.40px;top:263.80px;width:4.50px;height:4.50px;background:#e4c88c;"></div>
<div style="left:285px;top:263.80px;width:1px;height:4.50px;background:rgba(176,120,40,0.330);"></div>
<div style="left:283.40px;top:265px;width:4.50px;height:1px;background:rgba(176,120,40,0.138);"></div>
<div style="left:283.40px;top:266px;width:4.50px;height:1px;background:rgba(176,120,40,0.193);"></div>
<div style="left:283.40px;top:263.80px;width:4.5px;height:4.5px;box-shadow:inset 0 0 0 0.5px rgba(176,120,40,.55);"></div>
<span id="t68" style="left:290.00px;top:263px;font-size:4.5px;line-height:8px;color:#7e7e7e;font-weight:normal;letter-spacing:0.147px;">row-4</span>
<div style="left:309.00px;top:262.60px;width:27.70px;height:7.00px;background:#323232;border-radius:0.8px 0.8px 0 0;"></div>
<div style="left:314.40px;top:263.80px;width:4.50px;height:4.50px;background:#c6a56b;"></div>
<div style="left:314.40px;top:263.80px;width:4.50px;height:4.50px;background:#e4c88c;"></div>
<div style="left:316px;top:263.80px;width:1px;height:4.50px;background:rgba(176,120,40,0.330);"></div>
<div style="left:314.40px;top:265px;width:4.50px;height:1px;background:rgba(176,120,40,0.138);"></div>
<div style="left:314.40px;top:266px;width:4.50px;height:1px;background:rgba(176,120,40,0.193);"></div>
<div style="left:314.40px;top:263.80px;width:4.5px;height:4.5px;box-shadow:inset 0 0 0 0.5px rgba(176,120,40,.55);"></div>
<span id="t69" style="left:321.00px;top:263px;font-size:4.5px;line-height:8px;color:#7e7e7e;font-weight:normal;letter-spacing:0.195px;">头像</span>
<div style="left:337.50px;top:262.60px;width:27.20px;height:7.00px;background:#323232;border-radius:0.8px 0.8px 0 0;"></div>
<div style="left:342.60px;top:263.80px;width:4.50px;height:4.50px;background:#c6a56b;"></div>
<div style="left:342.60px;top:263.80px;width:4.50px;height:4.50px;background:#e4c88c;"></div>
<div style="left:344px;top:263.80px;width:1px;height:4.50px;background:rgba(176,120,40,0.247);"></div>
<div style="left:345px;top:263.80px;width:1px;height:4.50px;background:rgba(176,120,40,0.083);"></div>
<div style="left:342.60px;top:265px;width:4.50px;height:1px;background:rgba(176,120,40,0.138);"></div>
<div style="left:342.60px;top:266px;width:4.50px;height:1px;background:rgba(176,120,40,0.193);"></div>
<div style="left:342.60px;top:263.80px;width:4.5px;height:4.5px;box-shadow:inset 0 0 0 0.5px rgba(176,120,40,.55);"></div>
<span id="t70" style="left:349.00px;top:263px;font-size:4.5px;line-height:8px;color:#7e7e7e;font-weight:normal;letter-spacing:0.195px;">描述</span>
<div style="left:365.50px;top:262.60px;width:34.70px;height:7.00px;background:#323232;border-radius:0.8px 0.8px 0 0;"></div>
<div style="left:371.00px;top:263.80px;width:4.50px;height:4.50px;background:#c6a56b;"></div>
<div style="left:371.00px;top:263.80px;width:4.50px;height:4.50px;background:#e4c88c;"></div>
<div style="left:372px;top:263.80px;width:1px;height:4.50px;background:rgba(176,120,40,0.028);"></div>
<div style="left:373px;top:263.80px;width:1px;height:4.50px;background:rgba(176,120,40,0.303);"></div>
<div style="left:371.00px;top:265px;width:4.50px;height:1px;background:rgba(176,120,40,0.138);"></div>
<div style="left:371.00px;top:266px;width:4.50px;height:1px;background:rgba(176,120,40,0.193);"></div>
<div style="left:371.00px;top:263.80px;width:4.5px;height:4.5px;box-shadow:inset 0 0 0 0.5px rgba(176,120,40,.55);"></div>
<span id="t71" style="left:377.40px;top:263px;font-size:4.5px;line-height:8px;color:#7e7e7e;font-weight:normal;letter-spacing:0.180px;">shadow</span>
<div style="left:401.00px;top:262.60px;width:50.70px;height:7.00px;background:#323232;border-radius:0.8px 0.8px 0 0;"></div>
<div style="left:406.60px;top:263.80px;width:4.50px;height:4.50px;background:#c6a56b;"></div>
<div style="left:406.60px;top:263.80px;width:4.50px;height:4.50px;background:#e4c88c;"></div>
<div style="left:408px;top:263.80px;width:1px;height:4.50px;background:rgba(176,120,40,0.247);"></div>
<div style="left:409px;top:263.80px;width:1px;height:4.50px;background:rgba(176,120,40,0.083);"></div>
<div style="left:406.60px;top:265px;width:4.50px;height:1px;background:rgba(176,120,40,0.138);"></div>
<div style="left:406.60px;top:266px;width:4.50px;height:1px;background:rgba(176,120,40,0.193);"></div>
<div style="left:406.60px;top:263.80px;width:4.5px;height:4.5px;box-shadow:inset 0 0 0 0.5px rgba(176,120,40,.55);"></div>
<span id="t72" style="left:412.80px;top:263px;font-size:4.5px;line-height:8px;color:#7e7e7e;font-weight:normal;letter-spacing:0.020px;">5298597d329e6</span>
<div style="left:452.50px;top:262.60px;width:55.20px;height:7.00px;background:#323232;border-radius:0.8px 0.8px 0 0;"></div>
<div style="left:458.40px;top:263.80px;width:4.50px;height:4.50px;background:#c6a56b;"></div>
<div style="left:458.40px;top:263.80px;width:4.50px;height:4.50px;background:#e4c88c;"></div>
<div style="left:460px;top:263.80px;width:1px;height:4.50px;background:rgba(176,120,40,0.330);"></div>
<div style="left:458.40px;top:265px;width:4.50px;height:1px;background:rgba(176,120,40,0.138);"></div>
<div style="left:458.40px;top:266px;width:4.50px;height:1px;background:rgba(176,120,40,0.193);"></div>
<div style="left:458.40px;top:263.80px;width:4.5px;height:4.5px;box-shadow:inset 0 0 0 0.5px rgba(176,120,40,.55);"></div>
<span id="t73" style="left:464.60px;top:263px;font-size:4.5px;line-height:8px;color:#7e7e7e;font-weight:normal;letter-spacing:0.086px;">phone-template 2</span>
<div style="left:508.50px;top:262.60px;width:34.20px;height:7.00px;background:#323232;border-radius:0.8px 0.8px 0 0;"></div>
<div style="left:514.80px;top:263.80px;width:4.50px;height:4.50px;background:#c6a56b;"></div>
<div style="left:514.80px;top:263.80px;width:4.50px;height:4.50px;background:#e4c88c;"></div>
<div style="left:516px;top:263.80px;width:1px;height:4.50px;background:rgba(176,120,40,0.138);"></div>
<div style="left:517px;top:263.80px;width:1px;height:4.50px;background:rgba(176,120,40,0.193);"></div>
<div style="left:514.80px;top:265px;width:4.50px;height:1px;background:rgba(176,120,40,0.138);"></div>
<div style="left:514.80px;top:266px;width:4.50px;height:1px;background:rgba(176,120,40,0.193);"></div>
<div style="left:514.80px;top:263.80px;width:4.5px;height:4.5px;box-shadow:inset 0 0 0 0.5px rgba(176,120,40,.55);"></div>
<span id="t74" style="left:521.00px;top:263px;font-size:4.5px;line-height:8px;color:#7e7e7e;font-weight:normal;letter-spacing:-0.122px;">PHONE</span>
<div style="left:575.80px;top:262.60px;width:40.40px;height:7.00px;background:#323232;border-radius:0.8px 0.8px 0 0;"></div>
<div style="left:580.20px;top:263.80px;width:4.50px;height:4.50px;background:#c6a56b;"></div>
<div style="left:580.20px;top:263.80px;width:4.50px;height:4.50px;background:#e4c88c;"></div>
<div style="left:582px;top:263.80px;width:1px;height:4.50px;background:rgba(176,120,40,0.330);"></div>
<div style="left:580.20px;top:265px;width:4.50px;height:1px;background:rgba(176,120,40,0.138);"></div>
<div style="left:580.20px;top:266px;width:4.50px;height:1px;background:rgba(176,120,40,0.193);"></div>
<div style="left:580.20px;top:263.80px;width:4.5px;height:4.5px;box-shadow:inset 0 0 0 0.5px rgba(176,120,40,.55);"></div>
<span id="t75" style="left:586.60px;top:263px;font-size:4.5px;line-height:8px;color:#7e7e7e;font-weight:normal;letter-spacing:0.133px;">Pre-comp 2</span>
<div style="left:617.00px;top:262.60px;width:37.70px;height:7.00px;background:#323232;border-radius:0.8px 0.8px 0 0;"></div>
<div style="left:623.00px;top:263.80px;width:4.50px;height:4.50px;background:#c6a56b;"></div>
<div style="left:623.00px;top:263.80px;width:4.50px;height:4.50px;background:#e4c88c;"></div>
<div style="left:624px;top:263.80px;width:1px;height:4.50px;background:rgba(176,120,40,0.027);"></div>
<div style="left:625px;top:263.80px;width:1px;height:4.50px;background:rgba(176,120,40,0.303);"></div>
<div style="left:623.00px;top:265px;width:4.50px;height:1px;background:rgba(176,120,40,0.138);"></div>
<div style="left:623.00px;top:266px;width:4.50px;height:1px;background:rgba(176,120,40,0.193);"></div>
<div style="left:623.00px;top:263.80px;width:4.5px;height:4.5px;box-shadow:inset 0 0 0 0.5px rgba(176,120,40,.55);"></div>
<span id="t76" style="left:629.20px;top:263px;font-size:4.5px;line-height:8px;color:#7e7e7e;font-weight:normal;letter-spacing:0.547px;">字幕合成</span>
<div style="left:655.50px;top:262.60px;width:40.70px;height:7.00px;background:#323232;border-radius:0.8px 0.8px 0 0;"></div>
<div style="left:661.20px;top:263.80px;width:4.50px;height:4.50px;background:#c6a56b;"></div>
<div style="left:661.20px;top:263.80px;width:4.50px;height:4.50px;background:#e4c88c;"></div>
<div style="left:663px;top:263.80px;width:1px;height:4.50px;background:rgba(176,120,40,0.330);"></div>
<div style="left:661.20px;top:265px;width:4.50px;height:1px;background:rgba(176,120,40,0.138);"></div>
<div style="left:661.20px;top:266px;width:4.50px;height:1px;background:rgba(176,120,40,0.193);"></div>
<div style="left:661.20px;top:263.80px;width:4.5px;height:4.5px;box-shadow:inset 0 0 0 0.5px rgba(176,120,40,.55);"></div>
<span id="t77" style="left:667.60px;top:263px;font-size:4.5px;line-height:8px;color:#7e7e7e;font-weight:normal;letter-spacing:0.073px;">Pre-comp 3</span>
<div style="left:700.20px;top:265.40px;width:2.60px;height:1.62px;background:#ddd;clip-path:polygon(0 0,100% 0,50% 100%);"></div>
<div style="left:703.20px;top:264.20px;width:3.00px;height:4.00px;background:#bdbdbd;box-shadow:inset 0 0 0 0.5px #888;"></div>
<div style="left:0.00px;top:270.00px;width:714.00px;height:136.00px;background:#3e3e3e;"></div>
<div style="left:0.00px;top:269px;width:714.00px;height:1px;background:rgba(160,118,28,0.100);"></div>
<div style="left:0.00px;top:270px;width:714.00px;height:1px;background:rgba(160,118,28,0.800);"></div>
<div style="left:544.00px;top:262.00px;width:31.20px;height:8.90px;background:#3e3e3e;border-radius:1px 1px 0 0;"></div>
<div style="left:544.40px;top:261px;width:30.40px;height:1px;background:rgba(160,118,28,0.100);"></div>
<div style="left:544.40px;top:262px;width:30.40px;height:1px;background:rgba(160,118,28,0.700);"></div>
<div style="left:543px;top:262.20px;width:1px;height:8.00px;background:rgba(160,118,28,0.100);"></div>
<div style="left:544px;top:262.20px;width:1px;height:8.00px;background:rgba(160,118,28,0.700);"></div>
<div style="left:574px;top:262.20px;width:1px;height:8.00px;background:rgba(160,118,28,0.400);"></div>
<div style="left:575px;top:262.20px;width:1px;height:8.00px;background:rgba(160,118,28,0.400);"></div>
<div style="left:548.00px;top:263.80px;width:4.50px;height:4.50px;background:#c6a56b;"></div>
<div style="left:548.00px;top:263.80px;width:4.50px;height:4.50px;background:#e4c88c;"></div>
<div style="left:549px;top:263.80px;width:1px;height:4.50px;background:rgba(176,120,40,0.027);"></div>
<div style="left:550px;top:263.80px;width:1px;height:4.50px;background:rgba(176,120,40,0.303);"></div>
<div style="left:548.00px;top:265px;width:4.50px;height:1px;background:rgba(176,120,40,0.138);"></div>
<div style="left:548.00px;top:266px;width:4.50px;height:1px;background:rgba(176,120,40,0.193);"></div>
<div style="left:548.00px;top:263.80px;width:4.5px;height:4.5px;box-shadow:inset 0 0 0 0.5px rgba(176,120,40,.55);"></div>
<span id="t78" style="left:554.40px;top:263px;font-size:4.6px;line-height:8px;color:#f0f0f0;font-weight:normal;letter-spacing:0.203px;">phone</span>
<span id="t79" style="left:569.80px;top:262px;font-size:5.6px;line-height:8px;color:#e0e0e0;font-weight:normal;">×</span>
<span id="t80" style="left:-1.20px;top:271px;font-size:7.3px;line-height:8px;color:#d6a01f;font-weight:bold;letter-spacing:0.009px;">0:00:02:01</span>
<span id="t81" style="left:-0.40px;top:278px;font-size:3.7px;line-height:8px;color:#c08d1c;font-weight:normal;letter-spacing:0.206px;">00051 (25.00 fps)</span>
<div style="left:40.00px;top:274.40px;width:93.60px;height:6.80px;background:#a6a6a6;border-radius:0.6px;box-shadow:inset 0 0.6px 0 #7a7a7a;"></div>
<div style="left:43.6px;top:275.6px;width:2.4px;height:2.4px;border:0.6px solid #222;border-radius:50%;box-sizing:border-box;"></div>
<div style="left:43.20px;top:277.70px;width:0.60px;height:2.00px;background:#222;transform:rotate(35deg);"></div>
<div style="left:47.40px;top:277.20px;width:2.20px;height:1.38px;background:#222;clip-path:polygon(0 0,100% 0,50% 100%);"></div>
<div style="left:139.20px;top:275.40px;width:1.30px;height:5.40px;background:#d8d8d8;"></div>
<div style="left:140.50px;top:277.60px;width:3.00px;height:1.00px;background:#d8d8d8;"></div>
<div style="left:143.50px;top:275.40px;width:1.30px;height:5.40px;background:#d8d8d8;"></div>
<div style="left:146.10px;top:275.40px;width:1.30px;height:5.40px;background:#d8d8d8;"></div>
<div style="left:148.20px;top:279.60px;width:1.20px;height:1.20px;background:#d8d8d8;"></div>
<div style="left:155.00px;top:275.20px;width:2.00px;height:2.00px;background:#d8d8d8;"></div>
<div style="left:157.40px;top:276.60px;width:5.40px;height:4.60px;background:#cfcfcf;border-radius:1.4px;"></div>
<div style="left:158.80px;top:277.80px;width:2.40px;height:2.20px;background:#4a4a4a;border-radius:0.6px;"></div>
<div style="left:169.00px;top:278.80px;width:8.40px;height:2.20px;background:#cdcdcd;border-radius:0.6px;"></div>
<div style="left:171.0px;top:275.40000000000003px;width:4.4px;height:3.8px;border-radius:50% 50% 0 0;background:#d8d8d8;"></div>
<div style="left:182.40px;top:275.20px;width:5.60px;height:4.20px;background:#9c9c9c;transform:skewY(-14deg);"></div>
<div style="left:180.00px;top:276.80px;width:5.60px;height:4.20px;background:#d6d6d6;transform:skewY(-14deg);"></div>
<div style="left:191.0px;top:276.0px;width:8.2px;height:4.2px;border-radius:2.1px;background:linear-gradient(90deg,#808080,#e4e4e4);transform:rotate(-38deg);"></div>
<div style="left:206.5px;top:274.8px;width:7.0px;height:5.0px;border-radius:50%;background:#dcdcdc;"></div>
<div style="left:208.8px;top:276.1px;width:2.4px;height:2.4px;border-radius:50%;background:#4a4a4a;"></div>
<div style="left:204.50px;top:279.20px;width:3.40px;height:2.00px;background:#dcdcdc;border-radius:1px;transform:rotate(-30deg);"></div>
<div style="left:216.5px;top:275.40000000000003px;width:5.6px;height:5.0px;border:0.8px solid #d4d4d4;box-sizing:border-box;"></div>
<span id="t82" style="left:218.10px;top:274px;font-size:4.0px;line-height:8px;color:#e4e4e4;font-weight:normal;">x</span>
<div style="left:222.10px;top:276.20px;width:2.00px;height:3.40px;background:#d4d4d4;clip-path:polygon(0 30%,100% 0,100% 100%,0 70%);"></div>
<div style="left:0.00px;top:286.20px;width:230.00px;height:7.20px;background:#434343;background:linear-gradient(180deg,#484848,#3f3f3f);"></div>
<div style="left:0.00px;top:285.70px;width:230.00px;height:0.60px;background:#2c2c2c;"></div>
<div style="left:0.00px;top:293.20px;width:230.00px;height:0.60px;background:#2c2c2c;"></div>
<div style="left:3.6px;top:288.2px;width:0;height:0;border-top:1.8px solid transparent;border-bottom:1.8px solid transparent;border-right:2.6px solid #d4d4d4;"></div>
<div style="left:3.00px;top:289.20px;width:1.40px;height:1.60px;background:#d4d4d4;"></div>
<div style="left:6.80px;top:288.20px;width:0.60px;height:3.60px;background:#d4d4d4;"></div>
<div style="left:11.2px;top:288.6px;width:2.8px;height:2.8px;border-radius:50%;background:#d8d8d8;"></div>
<div style="left:17.40px;top:289.60px;width:3.40px;height:2.40px;background:#b4b4b4;"></div>
<div style="left:18.0px;top:288.0px;width:1.2px;height:2px;border:0.6px solid #b4b4b4;border-bottom:none;border-radius:1.2px 1.2px 0 0;"></div>
<div style="left:30.40px;top:288.60px;width:4.00px;height:2.60px;background:#d2d2d2;transform:rotate(-40deg);border-radius:0.6px;"></div>
<span id="t83" style="left:39.60px;top:286px;font-size:4.2px;line-height:8px;color:#9a9a9a;font-weight:normal;">#</span>
<span id="t84" style="left:48.80px;top:286px;font-size:4.1px;line-height:8px;color:#9a9a9a;font-weight:normal;letter-spacing:-0.111px;">Layer Name</span>
<div style="left:119.20px;top:291.00px;width:3.60px;height:0.70px;background:#d6d6d6;"></div>
<div style="left:120.0px;top:289.0px;width:0;height:0;border-left:1.1px solid transparent;border-right:1.1px solid transparent;border-bottom:1.8px solid #d6d6d6;"></div>
<span id="t85" style="left:126.40px;top:286px;font-size:3.6px;line-height:8px;color:#cfcfcf;font-weight:normal;">✱</span>
<div style="left:131.60px;top:289.80px;width:5.20px;height:0.60px;background:#cfcfcf;transform:rotate(40deg);"></div>
<span id="t86" style="left:138.60px;top:286px;font-size:4.4px;line-height:8px;color:#d8d8d8;font-weight:normal;font-style:italic;font-family:'Liberation Serif',serif;">fx</span>
<div style="left:144.60px;top:287.60px;width:3.60px;height:4.60px;background:#d2d2d2;background:repeating-linear-gradient(90deg,#d2d2d2 0,#d2d2d2 1px,#555 1px,#555 1.6px);"></div>
<div style="left:150.4px;top:288.2px;width:4.6px;height:3.2px;border-radius:1.4px;background:linear-gradient(90deg,#777,#ddd);transform:rotate(-35deg);"></div>
<div style="left:157.0px;top:287.8px;width:4.2px;height:4.2px;border-radius:50%;background:linear-gradient(90deg,#222 50%,#e8e8e8 50%);box-shadow:0 0 0 0.4px #bbb;"></div>
<div style="left:163.60px;top:288.00px;width:4.00px;height:4.00px;background:#cfcfcf;border-radius:1px;"></div>
<div style="left:164.60px;top:289.00px;width:2.00px;height:2.00px;background:#777;"></div>
<span id="t87" style="left:177.40px;top:286px;font-size:4.1px;line-height:8px;color:#9a9a9a;font-weight:normal;letter-spacing:-0.146px;">Parent</span>
<div style="left:172.60px;top:286.60px;width:0.50px;height:6.40px;background:#2f2f2f;"></div>
<div style="left:227.00px;top:286.60px;width:0.50px;height:6.40px;background:#2f2f2f;"></div>
<div style="left:0.00px;top:293.90px;width:230.00px;height:7.14px;background:#4a4a4a;"></div>
<div style="left:0.00px;top:300.64px;width:230.00px;height:0.50px;background:rgba(0,0,0,.18);"></div>
<div style="left:0.60px;top:298.37px;width:2.60px;height:0.80px;background:#e0e0e0;"></div>
<div style="left:0.2px;top:295.87px;width:3px;height:2.2px;border-radius:50% 50% 0 0;background:#d8d8d8;"></div>
<div style="left:10.20px;top:295.10px;width:4.80px;height:4.80px;background:#464646;"></div>
<div style="left:10.20px;top:299px;width:4.80px;height:1px;background:rgba(255,255,255,0.084);"></div>
<div style="left:16.00px;top:295.10px;width:4.80px;height:4.80px;background:#464646;"></div>
<div style="left:16.00px;top:299px;width:4.80px;height:1px;background:rgba(255,255,255,0.084);"></div>
<div style="left:25.80px;top:295.47px;width:2.70px;height:4.00px;background:#c4c4c4;clip-path:polygon(0 0,100% 50%,0 100%);"></div>
<div style="left:31.60px;top:295.30px;width:4.40px;height:4.40px;background:#cbad7c;background-image:linear-gradient(90deg,transparent 1.9px,rgba(255,255,255,.4) 1.9px,rgba(255,255,255,.4) 2.5px,transparent 2.5px),linear-gradient(180deg,transparent 1.9px,rgba(255,255,255,.4) 1.9px,rgba(255,255,255,.4) 2.5px,transparent 2.5px);"></div>
<span id="t88" style="left:40.00px;top:294px;font-size:5.2px;line-height:8px;color:#d4d4d4;font-weight:bold;">1</span>
<div style="left:47.60px;top:294.90px;width:5.80px;height:5.20px;background:#2a2a2a;box-shadow:inset 0 0 0 0.5px #999;"></div>
<div style="left:48.60px;top:295.90px;width:1.60px;height:1.60px;background:#d2382c;"></div>
<div style="left:50.40px;top:295.90px;width:1.80px;height:1.60px;background:#35a8d8;"></div>
<div style="left:49.20px;top:297.70px;width:2.40px;height:1.60px;background:#3cb44a;"></div>
<div style="left:55.00px;top:294.50px;width:61.80px;height:6.00px;background:#b6b6b6;"></div>
<span id="t89" style="left:56.20px;top:294px;font-size:5.2px;line-height:8px;color:#111;font-weight:bold;letter-spacing:-0.195px;">界面</span>
<div style="left:119.20px;top:298.67px;width:3.60px;height:0.70px;background:#d6d6d6;"></div>
<div style="left:119.9px;top:296.57px;width:0;height:0;border-left:1.1px solid transparent;border-right:1.1px solid transparent;border-bottom:1.8px solid #d6d6d6;"></div>
<div style="left:125.60px;top:295.10px;width:4.60px;height:4.80px;background:#484848;"></div>
<div style="left:131.20px;top:297.17px;width:6.00px;height:0.80px;background:#e4e4e4;transform:rotate(-48deg);"></div>
<div style="left:151.00px;top:295.10px;width:4.80px;height:4.80px;background:#454545;box-shadow:inset 0 0 0 0.4px #3a3a3a;"></div>
<div style="left:157.20px;top:295.10px;width:4.80px;height:4.80px;background:#454545;box-shadow:inset 0 0 0 0.4px #3a3a3a;"></div>
<div style="left:163.40px;top:295.10px;width:4.80px;height:4.80px;background:#454545;box-shadow:inset 0 0 0 0.4px #3a3a3a;"></div>
<div style="left:177.2px;top:295.67px;width:3.4px;height:3.4px;border-radius:50%;border:0.7px solid #9c9c9c;box-sizing:border-box;"></div>
<div style="left:178.60px;top:296.97px;width:2.60px;height:0.70px;background:#9c9c9c;"></div>
<div style="left:185.20px;top:294.80px;width:35.20px;height:5.40px;background:#4a4a4a;border-radius:0.8px;box-shadow:0 0 0 0.4px #2b2b2b;"></div>
<span id="t90" style="left:187.20px;top:294px;font-size:4.5px;line-height:8px;color:#d6d6d6;font-weight:normal;letter-spacing:0.043px;">7. 53549599:</span>
<div style="left:215.60px;top:296.77px;width:3.00px;height:1.88px;background:#e0e0e0;clip-path:polygon(0 0,100% 0,50% 100%);"></div>
<div style="left:0.00px;top:301.04px;width:230.00px;height:7.14px;background:#3d3d3d;"></div>
<div style="left:0.00px;top:307.78px;width:230.00px;height:0.50px;background:rgba(0,0,0,.18);"></div>
<div style="left:0.60px;top:305.51px;width:2.60px;height:0.80px;background:#e0e0e0;"></div>
<div style="left:0.2px;top:303.01px;width:3px;height:2.2px;border-radius:50% 50% 0 0;background:#d8d8d8;"></div>
<div style="left:10.20px;top:302.24px;width:4.80px;height:4.80px;background:#464646;"></div>
<div style="left:10.20px;top:306px;width:4.80px;height:1px;background:rgba(255,255,255,0.078);"></div>
<div style="left:10.20px;top:307px;width:4.80px;height:1px;background:rgba(255,255,255,0.006);"></div>
<div style="left:16.00px;top:302.24px;width:4.80px;height:4.80px;background:#464646;"></div>
<div style="left:16.00px;top:306px;width:4.80px;height:1px;background:rgba(255,255,255,0.078);"></div>
<div style="left:16.00px;top:307px;width:4.80px;height:1px;background:rgba(255,255,255,0.006);"></div>
<div style="left:25.80px;top:302.61px;width:2.70px;height:4.00px;background:#c4c4c4;clip-path:polygon(0 0,100% 50%,0 100%);"></div>
<div style="left:31.60px;top:302.44px;width:4.40px;height:4.40px;background:#cbad7c;background-image:linear-gradient(90deg,transparent 1.9px,rgba(255,255,255,.4) 1.9px,rgba(255,255,255,.4) 2.5px,transparent 2.5px),linear-gradient(180deg,transparent 1.9px,rgba(255,255,255,.4) 1.9px,rgba(255,255,255,.4) 2.5px,transparent 2.5px);"></div>
<span id="t91" style="left:40.00px;top:301px;font-size:5.2px;line-height:8px;color:#d4d4d4;font-weight:bold;">2</span>
<div style="left:47.60px;top:302.04px;width:5.80px;height:5.20px;background:#2a2a2a;box-shadow:inset 0 0 0 0.5px #999;"></div>
<div style="left:48.60px;top:303.04px;width:1.60px;height:1.60px;background:#d2382c;"></div>
<div style="left:50.40px;top:303.04px;width:1.80px;height:1.60px;background:#35a8d8;"></div>
<div style="left:49.20px;top:304.84px;width:2.40px;height:1.60px;background:#3cb44a;"></div>
<span id="t92" style="left:55.60px;top:301px;font-size:5.2px;line-height:8px;color:#f0f0f0;font-weight:bold;letter-spacing:0.130px;">[字幕合成]</span>
<div style="left:119.20px;top:305.81px;width:3.60px;height:0.70px;background:#d6d6d6;"></div>
<div style="left:119.9px;top:303.71px;width:0;height:0;border-left:1.1px solid transparent;border-right:1.1px solid transparent;border-bottom:1.8px solid #d6d6d6;"></div>
<div style="left:125.60px;top:302.24px;width:4.60px;height:4.80px;background:#484848;"></div>
<div style="left:131.20px;top:304.31px;width:6.00px;height:0.80px;background:#e4e4e4;transform:rotate(-48deg);"></div>
<div style="left:151.00px;top:302.24px;width:4.80px;height:4.80px;background:#454545;box-shadow:inset 0 0 0 0.4px #3a3a3a;"></div>
<div style="left:157.20px;top:302.24px;width:4.80px;height:4.80px;background:#454545;box-shadow:inset 0 0 0 0.4px #3a3a3a;"></div>
<div style="left:163.40px;top:302.24px;width:4.80px;height:4.80px;background:#454545;box-shadow:inset 0 0 0 0.4px #3a3a3a;"></div>
<div style="left:177.2px;top:302.81px;width:3.4px;height:3.4px;border-radius:50%;border:0.7px solid #9c9c9c;box-sizing:border-box;"></div>
<div style="left:178.60px;top:304.11px;width:2.60px;height:0.70px;background:#9c9c9c;"></div>
<div style="left:185.20px;top:301.94px;width:35.20px;height:5.40px;background:#4a4a4a;border-radius:0.8px;box-shadow:0 0 0 0.4px #2b2b2b;"></div>
<span id="t93" style="left:187.20px;top:302px;font-size:4.5px;line-height:8px;color:#d6d6d6;font-weight:normal;letter-spacing:0.043px;">7. 53549599:</span>
<div style="left:215.60px;top:303.91px;width:3.00px;height:1.88px;background:#e0e0e0;clip-path:polygon(0 0,100% 0,50% 100%);"></div>
<div style="left:0.00px;top:308.18px;width:230.00px;height:7.14px;background:#343434;"></div>
<div style="left:0.00px;top:314.92px;width:230.00px;height:0.50px;background:rgba(0,0,0,.18);"></div>
<div style="left:16.00px;top:309.38px;width:4.80px;height:4.80px;background:#464646;"></div>
<div style="left:16.00px;top:313px;width:4.80px;height:1px;background:rgba(255,255,255,0.059);"></div>
<div style="left:16.00px;top:314px;width:4.80px;height:1px;background:rgba(255,255,255,0.025);"></div>
<div style="left:25.80px;top:309.75px;width:2.70px;height:4.00px;background:#c4c4c4;clip-path:polygon(0 0,100% 50%,0 100%);"></div>
<div style="left:31.60px;top:309.58px;width:4.40px;height:4.40px;background:#aeaade;background-image:linear-gradient(90deg,transparent 1.9px,rgba(255,255,255,.4) 1.9px,rgba(255,255,255,.4) 2.5px,transparent 2.5px),linear-gradient(180deg,transparent 1.9px,rgba(255,255,255,.4) 1.9px,rgba(255,255,255,.4) 2.5px,transparent 2.5px);"></div>
<span id="t94" style="left:40.00px;top:308px;font-size:5.2px;line-height:8px;color:#d4d4d4;font-weight:bold;">3</span>
<div style="left:47.60px;top:309.18px;width:5.80px;height:5.20px;background:#0d1730;"></div>
<div style="left:48.20px;top:309.98px;width:3.60px;height:1.20px;background:#3fb2ea;"></div>
<div style="left:50.00px;top:311.98px;width:3.00px;height:1.20px;background:#2f8fd0;"></div>
<span id="t95" style="left:55.60px;top:308px;font-size:5.2px;line-height:8px;color:#f0f0f0;font-weight:bold;letter-spacing:-0.050px;">speaker 1</span>
<div style="left:119.20px;top:312.95px;width:3.60px;height:0.70px;background:#d6d6d6;"></div>
<div style="left:119.9px;top:310.85px;width:0;height:0;border-left:1.1px solid transparent;border-right:1.1px solid transparent;border-bottom:1.8px solid #d6d6d6;"></div>
<div style="left:131.20px;top:311.45px;width:6.00px;height:0.80px;background:#e4e4e4;transform:rotate(-48deg);"></div>
<div style="left:151.00px;top:309.38px;width:4.80px;height:4.80px;background:#454545;box-shadow:inset 0 0 0 0.4px #3a3a3a;"></div>
<div style="left:157.20px;top:309.38px;width:4.80px;height:4.80px;background:#454545;box-shadow:inset 0 0 0 0.4px #3a3a3a;"></div>
<div style="left:163.40px;top:309.38px;width:4.80px;height:4.80px;background:#454545;box-shadow:inset 0 0 0 0.4px #3a3a3a;"></div>
<div style="left:177.2px;top:309.95px;width:3.4px;height:3.4px;border-radius:50%;border:0.7px solid #9c9c9c;box-sizing:border-box;"></div>
<div style="left:178.60px;top:311.25px;width:2.60px;height:0.70px;background:#9c9c9c;"></div>
<div style="left:185.20px;top:309.08px;width:35.20px;height:5.40px;background:#4a4a4a;border-radius:0.8px;box-shadow:0 0 0 0.4px #2b2b2b;"></div>
<span id="t96" style="left:187.60px;top:309px;font-size:4.7px;line-height:8px;color:#d6d6d6;font-weight:normal;letter-spacing:-0.055px;">None</span>
<div style="left:215.60px;top:311.05px;width:3.00px;height:1.88px;background:#e0e0e0;clip-path:polygon(0 0,100% 0,50% 100%);"></div>
<div style="left:0.00px;top:315.32px;width:230.00px;height:7.14px;background:#3c3c3c;"></div>
<div style="left:0.00px;top:322.06px;width:230.00px;height:0.50px;background:rgba(0,0,0,.18);"></div>
<div style="left:0.60px;top:319.79px;width:2.60px;height:0.80px;background:#e0e0e0;"></div>
<div style="left:0.2px;top:317.29px;width:3px;height:2.2px;border-radius:50% 50% 0 0;background:#d8d8d8;"></div>
<div style="left:10.20px;top:316.52px;width:4.80px;height:4.80px;background:#464646;"></div>
<div style="left:10.20px;top:320px;width:4.80px;height:1px;background:rgba(255,255,255,0.039);"></div>
<div style="left:10.20px;top:321px;width:4.80px;height:1px;background:rgba(255,255,255,0.045);"></div>
<div style="left:16.00px;top:316.52px;width:4.80px;height:4.80px;background:#464646;"></div>
<div style="left:16.00px;top:320px;width:4.80px;height:1px;background:rgba(255,255,255,0.039);"></div>
<div style="left:16.00px;top:321px;width:4.80px;height:1px;background:rgba(255,255,255,0.045);"></div>
<div style="left:25.80px;top:316.89px;width:2.70px;height:4.00px;background:#c4c4c4;clip-path:polygon(0 0,100% 50%,0 100%);"></div>
<div style="left:31.60px;top:316.72px;width:4.40px;height:4.40px;background:#aeaade;background-image:linear-gradient(90deg,transparent 1.9px,rgba(255,255,255,.4) 1.9px,rgba(255,255,255,.4) 2.5px,transparent 2.5px),linear-gradient(180deg,transparent 1.9px,rgba(255,255,255,.4) 1.9px,rgba(255,255,255,.4) 2.5px,transparent 2.5px);"></div>
<span id="t97" style="left:40.00px;top:315px;font-size:5.2px;line-height:8px;color:#d4d4d4;font-weight:bold;">4</span>
<div style="left:47.60px;top:316.32px;width:5.80px;height:5.20px;background:#0d1730;"></div>
<div style="left:48.20px;top:317.12px;width:3.60px;height:1.20px;background:#3fb2ea;"></div>
<div style="left:50.00px;top:319.12px;width:3.00px;height:1.20px;background:#2f8fd0;"></div>
<span id="t98" style="left:55.60px;top:315px;font-size:5.2px;line-height:8px;color:#f0f0f0;font-weight:bold;letter-spacing:-0.050px;">speaker 2</span>
<div style="left:119.20px;top:320.09px;width:3.60px;height:0.70px;background:#d6d6d6;"></div>
<div style="left:119.9px;top:317.99px;width:0;height:0;border-left:1.1px solid transparent;border-right:1.1px solid transparent;border-bottom:1.8px solid #d6d6d6;"></div>
<div style="left:131.20px;top:318.59px;width:6.00px;height:0.80px;background:#e4e4e4;transform:rotate(-48deg);"></div>
<div style="left:151.00px;top:316.52px;width:4.80px;height:4.80px;background:#454545;box-shadow:inset 0 0 0 0.4px #3a3a3a;"></div>
<div style="left:157.20px;top:316.52px;width:4.80px;height:4.80px;background:#454545;box-shadow:inset 0 0 0 0.4px #3a3a3a;"></div>
<div style="left:163.40px;top:316.52px;width:4.80px;height:4.80px;background:#454545;box-shadow:inset 0 0 0 0.4px #3a3a3a;"></div>
<div style="left:177.2px;top:317.09px;width:3.4px;height:3.4px;border-radius:50%;border:0.7px solid #9c9c9c;box-sizing:border-box;"></div>
<div style="left:178.60px;top:318.39px;width:2.60px;height:0.70px;background:#9c9c9c;"></div>
<div style="left:185.20px;top:316.22px;width:35.20px;height:5.40px;background:#4a4a4a;border-radius:0.8px;box-shadow:0 0 0 0.4px #2b2b2b;"></div>
<span id="t99" style="left:187.60px;top:316px;font-size:4.7px;line-height:8px;color:#d6d6d6;font-weight:normal;letter-spacing:-0.055px;">None</span>
<div style="left:215.60px;top:318.19px;width:3.00px;height:1.88px;background:#e0e0e0;clip-path:polygon(0 0,100% 0,50% 100%);"></div>
<div style="left:0.00px;top:322.46px;width:230.00px;height:7.14px;background:#343434;"></div>
<div style="left:0.00px;top:329.20px;width:230.00px;height:0.50px;background:rgba(0,0,0,.18);"></div>
<div style="left:0.60px;top:326.93px;width:2.60px;height:0.80px;background:#e0e0e0;"></div>
<div style="left:0.2px;top:324.43px;width:3px;height:2.2px;border-radius:50% 50% 0 0;background:#d8d8d8;"></div>
<div style="left:10.20px;top:323.66px;width:4.80px;height:4.80px;background:#464646;"></div>
<div style="left:10.20px;top:327px;width:4.80px;height:1px;background:rgba(255,255,255,0.020);"></div>
<div style="left:10.20px;top:328px;width:4.80px;height:1px;background:rgba(255,255,255,0.064);"></div>
<div style="left:16.00px;top:323.66px;width:4.80px;height:4.80px;background:#464646;"></div>
<div style="left:16.00px;top:327px;width:4.80px;height:1px;background:rgba(255,255,255,0.020);"></div>
<div style="left:16.00px;top:328px;width:4.80px;height:1px;background:rgba(255,255,255,0.064);"></div>
<div style="left:25.80px;top:324.03px;width:2.70px;height:4.00px;background:#c4c4c4;clip-path:polygon(0 0,100% 50%,0 100%);"></div>
<div style="left:31.60px;top:323.86px;width:4.40px;height:4.40px;background:#aeaade;background-image:linear-gradient(90deg,transparent 1.9px,rgba(255,255,255,.4) 1.9px,rgba(255,255,255,.4) 2.5px,transparent 2.5px),linear-gradient(180deg,transparent 1.9px,rgba(255,255,255,.4) 1.9px,rgba(255,255,255,.4) 2.5px,transparent 2.5px);"></div>
<span id="t100" style="left:40.00px;top:322px;font-size:5.2px;line-height:8px;color:#d4d4d4;font-weight:bold;">5</span>
<div style="left:47.60px;top:323.46px;width:5.80px;height:5.20px;background:#0d1730;"></div>
<div style="left:48.20px;top:324.26px;width:3.60px;height:1.20px;background:#3fb2ea;"></div>
<div style="left:50.00px;top:326.26px;width:3.00px;height:1.20px;background:#2f8fd0;"></div>
<span id="t101" style="left:55.60px;top:322px;font-size:5.2px;line-height:8px;color:#f0f0f0;font-weight:bold;letter-spacing:-0.034px;">flare</span>
<div style="left:119.20px;top:327.23px;width:3.60px;height:0.70px;background:#d6d6d6;"></div>
<div style="left:119.9px;top:325.13px;width:0;height:0;border-left:1.1px solid transparent;border-right:1.1px solid transparent;border-bottom:1.8px solid #d6d6d6;"></div>
<div style="left:131.20px;top:325.73px;width:6.00px;height:0.80px;background:#e4e4e4;transform:rotate(-48deg);"></div>
<div style="left:151.00px;top:323.66px;width:4.80px;height:4.80px;background:#454545;box-shadow:inset 0 0 0 0.4px #3a3a3a;"></div>
<div style="left:157.20px;top:323.66px;width:4.80px;height:4.80px;background:#454545;box-shadow:inset 0 0 0 0.4px #3a3a3a;"></div>
<div style="left:163.40px;top:323.66px;width:4.80px;height:4.80px;background:#454545;box-shadow:inset 0 0 0 0.4px #3a3a3a;"></div>
<div style="left:177.2px;top:324.23px;width:3.4px;height:3.4px;border-radius:50%;border:0.7px solid #9c9c9c;box-sizing:border-box;"></div>
<div style="left:178.60px;top:325.53px;width:2.60px;height:0.70px;background:#9c9c9c;"></div>
<div style="left:185.20px;top:323.36px;width:35.20px;height:5.40px;background:#4a4a4a;border-radius:0.8px;box-shadow:0 0 0 0.4px #2b2b2b;"></div>
<span id="t102" style="left:187.60px;top:323px;font-size:4.7px;line-height:8px;color:#d6d6d6;font-weight:normal;letter-spacing:-0.055px;">None</span>
<div style="left:215.60px;top:325.33px;width:3.00px;height:1.88px;background:#e0e0e0;clip-path:polygon(0 0,100% 0,50% 100%);"></div>
<div style="left:0.00px;top:329.60px;width:230.00px;height:7.14px;background:#3c3c3c;"></div>
<div style="left:0.00px;top:336.34px;width:230.00px;height:0.50px;background:rgba(0,0,0,.18);"></div>
<div style="left:16.00px;top:330.80px;width:4.80px;height:4.80px;background:#464646;"></div>
<div style="left:16.00px;top:335px;width:4.80px;height:1px;background:rgba(255,255,255,0.084);"></div>
<div style="left:25.20px;top:331.97px;width:4.00px;height:2.70px;background:#c4c4c4;clip-path:polygon(0 0,100% 0,50% 100%);"></div>
<div style="left:31.60px;top:331.00px;width:4.40px;height:4.40px;background:#aeaade;background-image:linear-gradient(90deg,transparent 1.9px,rgba(255,255,255,.4) 1.9px,rgba(255,255,255,.4) 2.5px,transparent 2.5px),linear-gradient(180deg,transparent 1.9px,rgba(255,255,255,.4) 1.9px,rgba(255,255,255,.4) 2.5px,transparent 2.5px);"></div>
<span id="t103" style="left:40.00px;top:329px;font-size:5.2px;line-height:8px;color:#d4d4d4;font-weight:bold;">6</span>
<div style="left:47.60px;top:330.60px;width:5.80px;height:5.20px;background:#0d1730;"></div>
<div style="left:48.20px;top:331.40px;width:3.60px;height:1.20px;background:#3fb2ea;"></div>
<div style="left:50.00px;top:333.40px;width:3.00px;height:1.20px;background:#2f8fd0;"></div>
<div style="left:54.80px;top:330.60px;width:5.40px;height:5.20px;background:#f0f0f0;"></div>
<div style="left:56.1px;top:331.80px;width:2.8px;height:2.8px;border-radius:50%;background:#111;"></div>
<span id="t104" style="left:62.60px;top:329px;font-size:5.2px;line-height:8px;color:#f0f0f0;font-weight:bold;letter-spacing:-0.187px;">screen</span>
<div style="left:119.20px;top:334.37px;width:3.60px;height:0.70px;background:#d6d6d6;"></div>
<div style="left:119.9px;top:332.27px;width:0;height:0;border-left:1.1px solid transparent;border-right:1.1px solid transparent;border-bottom:1.8px solid #d6d6d6;"></div>
<div style="left:131.20px;top:332.87px;width:6.00px;height:0.80px;background:#e4e4e4;transform:rotate(-48deg);"></div>
<div style="left:151.00px;top:330.80px;width:4.80px;height:4.80px;background:#454545;box-shadow:inset 0 0 0 0.4px #3a3a3a;"></div>
<div style="left:157.20px;top:330.80px;width:4.80px;height:4.80px;background:#454545;box-shadow:inset 0 0 0 0.4px #3a3a3a;"></div>
<div style="left:163.40px;top:330.80px;width:4.80px;height:4.80px;background:#454545;box-shadow:inset 0 0 0 0.4px #3a3a3a;"></div>
<div style="left:177.2px;top:331.37px;width:3.4px;height:3.4px;border-radius:50%;border:0.7px solid #9c9c9c;box-sizing:border-box;"></div>
<div style="left:178.60px;top:332.67px;width:2.60px;height:0.70px;background:#9c9c9c;"></div>
<div style="left:185.20px;top:330.50px;width:35.20px;height:5.40px;background:#4a4a4a;border-radius:0.8px;box-shadow:0 0 0 0.4px #2b2b2b;"></div>
<span id="t105" style="left:187.60px;top:330px;font-size:4.7px;line-height:8px;color:#d6d6d6;font-weight:normal;letter-spacing:-0.055px;">None</span>
<div style="left:215.60px;top:332.47px;width:3.00px;height:1.88px;background:#e0e0e0;clip-path:polygon(0 0,100% 0,50% 100%);"></div>
<div style="left:0.00px;top:336.74px;width:230.00px;height:7.14px;background:#3f3f3f;"></div>
<div style="left:0.00px;top:343.48px;width:230.00px;height:0.50px;background:rgba(0,0,0,.18);"></div>
<div style="left:47.8px;top:338.31px;width:3.6px;height:3.6px;border-radius:50%;border:0.7px solid #cfcfcf;box-sizing:border-box;"></div>
<div style="left:49.50px;top:338.91px;width:0.60px;height:1.60px;background:#cfcfcf;"></div>
<span id="t106" style="left:54.60px;top:337px;font-size:4.8px;line-height:8px;color:#b8b8b8;font-weight:normal;letter-spacing:-0.199px;">Scale</span>
<div style="left:119.40px;top:338.14px;width:4.60px;height:4.40px;background:#4a4a4a;"></div>
<span id="t107" style="left:126.20px;top:337px;font-size:4.3px;line-height:8px;color:#c8941e;font-weight:bold;letter-spacing:0.306px;">100.1,100.0%</span>
<div style="left:126.20px;top:342px;width:30.20px;height:1px;background:rgba(200,148,30,0.273);"></div>
<div style="left:126.20px;top:343px;width:30.20px;height:1px;background:rgba(200,148,30,0.077);"></div>
<div style="left:0.00px;top:343.88px;width:230.00px;height:7.14px;background:#343434;"></div>
<div style="left:0.00px;top:350.62px;width:230.00px;height:0.50px;background:rgba(0,0,0,.18);"></div>
<div style="left:0.60px;top:348.35px;width:2.60px;height:0.80px;background:#e0e0e0;"></div>
<div style="left:0.2px;top:345.85px;width:3px;height:2.2px;border-radius:50% 50% 0 0;background:#d8d8d8;"></div>
<div style="left:10.20px;top:345.08px;width:4.80px;height:4.80px;background:#464646;"></div>
<div style="left:10.20px;top:349px;width:4.80px;height:1px;background:rgba(255,255,255,0.084);"></div>
<div style="left:16.00px;top:345.08px;width:4.80px;height:4.80px;background:#464646;"></div>
<div style="left:16.00px;top:349px;width:4.80px;height:1px;background:rgba(255,255,255,0.084);"></div>
<div style="left:25.20px;top:346.25px;width:4.00px;height:2.70px;background:#c4c4c4;clip-path:polygon(0 0,100% 0,50% 100%);"></div>
<div style="left:31.60px;top:345.28px;width:4.40px;height:4.40px;background:#aeaade;background-image:linear-gradient(90deg,transparent 1.9px,rgba(255,255,255,.4) 1.9px,rgba(255,255,255,.4) 2.5px,transparent 2.5px),linear-gradient(180deg,transparent 1.9px,rgba(255,255,255,.4) 1.9px,rgba(255,255,255,.4) 2.5px,transparent 2.5px);"></div>
<span id="t108" style="left:40.00px;top:344px;font-size:5.2px;line-height:8px;color:#d4d4d4;font-weight:bold;">7</span>
<div style="left:47.60px;top:344.88px;width:5.80px;height:5.20px;background:#bfe0f4;box-shadow:inset 0 0 0 0.5px #ddd;"></div>
<div style="left:48.20px;top:347.48px;width:4.60px;height:2.00px;background:#3d8fc4;"></div>
<div style="left:54.80px;top:344.88px;width:5.40px;height:5.20px;background:#f0f0f0;"></div>
<div style="left:56.1px;top:346.08px;width:2.8px;height:2.8px;border-radius:50%;background:#111;"></div>
<span id="t109" style="left:62.60px;top:344px;font-size:5.2px;line-height:8px;color:#f0f0f0;font-weight:bold;letter-spacing:0.023px;">[535495993.jpg]</span>
<div style="left:119.20px;top:348.65px;width:3.60px;height:0.70px;background:#d6d6d6;"></div>
<div style="left:119.9px;top:346.55px;width:0;height:0;border-left:1.1px solid transparent;border-right:1.1px solid transparent;border-bottom:1.8px solid #d6d6d6;"></div>
<div style="left:131.20px;top:347.15px;width:6.00px;height:0.80px;background:#e4e4e4;transform:rotate(-48deg);"></div>
<div style="left:151.00px;top:345.08px;width:4.80px;height:4.80px;background:#454545;box-shadow:inset 0 0 0 0.4px #3a3a3a;"></div>
<div style="left:157.20px;top:345.08px;width:4.80px;height:4.80px;background:#454545;box-shadow:inset 0 0 0 0.4px #3a3a3a;"></div>
<div style="left:163.40px;top:345.08px;width:4.80px;height:4.80px;background:#454545;box-shadow:inset 0 0 0 0.4px #3a3a3a;"></div>
<div style="left:177.2px;top:345.65px;width:3.4px;height:3.4px;border-radius:50%;border:0.7px solid #9c9c9c;box-sizing:border-box;"></div>
<div style="left:178.60px;top:346.95px;width:2.60px;height:0.70px;background:#9c9c9c;"></div>
<div style="left:185.20px;top:344.78px;width:35.20px;height:5.40px;background:#4a4a4a;border-radius:0.8px;box-shadow:0 0 0 0.4px #2b2b2b;"></div>
<span id="t110" style="left:187.60px;top:345px;font-size:4.7px;line-height:8px;color:#d6d6d6;font-weight:normal;letter-spacing:-0.055px;">None</span>
<div style="left:215.60px;top:346.75px;width:3.00px;height:1.88px;background:#e0e0e0;clip-path:polygon(0 0,100% 0,50% 100%);"></div>
<div style="left:0.00px;top:351.02px;width:230.00px;height:7.14px;background:#3f3f3f;"></div>
<div style="left:0.00px;top:357.76px;width:230.00px;height:0.50px;background:rgba(0,0,0,.18);"></div>
<div style="left:4.6px;top:353.29px;width:2.6px;height:2.6px;background:#e2c04a;transform:rotate(45deg);"></div>
<div style="left:10.40px;top:352.99px;width:2.16px;height:3.20px;background:#8a8a8a;clip-path:polygon(0 0,100% 50%,0 100%);"></div>
<div style="left:47.2px;top:352.59px;width:3.6px;height:3.6px;border-radius:50%;border:0.7px solid #cfcfcf;box-sizing:border-box;"></div>
<div style="left:48.90px;top:353.19px;width:0.60px;height:1.60px;background:#cfcfcf;"></div>
<div style="left:54.2px;top:352.79px;width:3.6px;height:3.6px;border-left:0.7px solid #aaa;border-bottom:0.7px solid #aaa;box-sizing:border-box;"></div>
<span id="t111" style="left:62.40px;top:351px;font-size:4.8px;line-height:8px;color:#b8b8b8;font-weight:normal;letter-spacing:0.141px;">Position</span>
<span id="t112" style="left:119.20px;top:351px;font-size:4.3px;line-height:8px;color:#c8941e;font-weight:bold;letter-spacing:0.261px;">2370.0,1116.0</span>
<div style="left:119.20px;top:356px;width:30.40px;height:1px;background:rgba(200,148,30,0.077);"></div>
<div style="left:119.20px;top:357px;width:30.40px;height:1px;background:rgba(200,148,30,0.273);"></div>
<div style="left:0.00px;top:358.16px;width:230.00px;height:7.14px;background:#3c3c3c;"></div>
<div style="left:0.00px;top:364.90px;width:230.00px;height:0.50px;background:rgba(0,0,0,.18);"></div>
<div style="left:0.60px;top:362.63px;width:2.60px;height:0.80px;background:#e0e0e0;"></div>
<div style="left:0.2px;top:360.13px;width:3px;height:2.2px;border-radius:50% 50% 0 0;background:#d8d8d8;"></div>
<div style="left:10.20px;top:359.36px;width:4.80px;height:4.80px;background:#464646;"></div>
<div style="left:10.20px;top:363px;width:4.80px;height:1px;background:rgba(255,255,255,0.062);"></div>
<div style="left:10.20px;top:364px;width:4.80px;height:1px;background:rgba(255,255,255,0.022);"></div>
<div style="left:16.00px;top:359.36px;width:4.80px;height:4.80px;background:#464646;"></div>
<div style="left:16.00px;top:363px;width:4.80px;height:1px;background:rgba(255,255,255,0.062);"></div>
<div style="left:16.00px;top:364px;width:4.80px;height:1px;background:rgba(255,255,255,0.022);"></div>
<div style="left:25.80px;top:359.73px;width:2.70px;height:4.00px;background:#c4c4c4;clip-path:polygon(0 0,100% 50%,0 100%);"></div>
<div style="left:31.60px;top:359.56px;width:4.40px;height:4.40px;background:#aeaade;background-image:linear-gradient(90deg,transparent 1.9px,rgba(255,255,255,.4) 1.9px,rgba(255,255,255,.4) 2.5px,transparent 2.5px),linear-gradient(180deg,transparent 1.9px,rgba(255,255,255,.4) 1.9px,rgba(255,255,255,.4) 2.5px,transparent 2.5px);"></div>
<span id="t113" style="left:40.00px;top:358px;font-size:5.2px;line-height:8px;color:#d4d4d4;font-weight:bold;">8</span>
<div style="left:47.60px;top:359.16px;width:5.80px;height:5.20px;background:#0d1730;"></div>
<div style="left:48.20px;top:359.96px;width:3.60px;height:1.20px;background:#3fb2ea;"></div>
<div style="left:50.00px;top:361.96px;width:3.00px;height:1.20px;background:#2f8fd0;"></div>
<span id="t114" style="left:55.60px;top:358px;font-size:5.2px;line-height:8px;color:#f0f0f0;font-weight:bold;letter-spacing:-0.134px;">black</span>
<div style="left:119.20px;top:362.93px;width:3.60px;height:0.70px;background:#d6d6d6;"></div>
<div style="left:119.9px;top:360.83px;width:0;height:0;border-left:1.1px solid transparent;border-right:1.1px solid transparent;border-bottom:1.8px solid #d6d6d6;"></div>
<div style="left:131.20px;top:361.43px;width:6.00px;height:0.80px;background:#e4e4e4;transform:rotate(-48deg);"></div>
<div style="left:151.00px;top:359.36px;width:4.80px;height:4.80px;background:#454545;box-shadow:inset 0 0 0 0.4px #3a3a3a;"></div>
<div style="left:157.20px;top:359.36px;width:4.80px;height:4.80px;background:#454545;box-shadow:inset 0 0 0 0.4px #3a3a3a;"></div>
<div style="left:163.40px;top:359.36px;width:4.80px;height:4.80px;background:#454545;box-shadow:inset 0 0 0 0.4px #3a3a3a;"></div>
<div style="left:177.2px;top:359.93px;width:3.4px;height:3.4px;border-radius:50%;border:0.7px solid #9c9c9c;box-sizing:border-box;"></div>
<div style="left:178.60px;top:361.23px;width:2.60px;height:0.70px;background:#9c9c9c;"></div>
<div style="left:185.20px;top:359.06px;width:35.20px;height:5.40px;background:#4a4a4a;border-radius:0.8px;box-shadow:0 0 0 0.4px #2b2b2b;"></div>
<span id="t115" style="left:187.60px;top:359px;font-size:4.7px;line-height:8px;color:#d6d6d6;font-weight:normal;letter-spacing:-0.055px;">None</span>
<div style="left:215.60px;top:361.03px;width:3.00px;height:1.88px;background:#e0e0e0;clip-path:polygon(0 0,100% 0,50% 100%);"></div>
<div style="left:0.00px;top:365.30px;width:230.00px;height:7.14px;background:#343434;"></div>
<div style="left:0.00px;top:372.04px;width:230.00px;height:0.50px;background:rgba(0,0,0,.18);"></div>
<div style="left:0.60px;top:369.77px;width:2.60px;height:0.80px;background:#e0e0e0;"></div>
<div style="left:0.2px;top:367.27px;width:3px;height:2.2px;border-radius:50% 50% 0 0;background:#d8d8d8;"></div>
<div style="left:10.20px;top:366.50px;width:4.80px;height:4.80px;background:#464646;"></div>
<div style="left:10.20px;top:370px;width:4.80px;height:1px;background:rgba(255,255,255,0.042);"></div>
<div style="left:10.20px;top:371px;width:4.80px;height:1px;background:rgba(255,255,255,0.042);"></div>
<div style="left:16.00px;top:366.50px;width:4.80px;height:4.80px;background:#464646;"></div>
<div style="left:16.00px;top:370px;width:4.80px;height:1px;background:rgba(255,255,255,0.042);"></div>
<div style="left:16.00px;top:371px;width:4.80px;height:1px;background:rgba(255,255,255,0.042);"></div>
<div style="left:25.80px;top:366.87px;width:2.70px;height:4.00px;background:#c4c4c4;clip-path:polygon(0 0,100% 50%,0 100%);"></div>
<div style="left:31.60px;top:366.70px;width:4.40px;height:4.40px;background:#aeaade;background-image:linear-gradient(90deg,transparent 1.9px,rgba(255,255,255,.4) 1.9px,rgba(255,255,255,.4) 2.5px,transparent 2.5px),linear-gradient(180deg,transparent 1.9px,rgba(255,255,255,.4) 1.9px,rgba(255,255,255,.4) 2.5px,transparent 2.5px);"></div>
<span id="t116" style="left:40.00px;top:365px;font-size:5.2px;line-height:8px;color:#d4d4d4;font-weight:bold;">9</span>
<div style="left:47.60px;top:366.30px;width:5.80px;height:5.20px;background:#0d1730;"></div>
<div style="left:48.20px;top:367.10px;width:3.60px;height:1.20px;background:#3fb2ea;"></div>
<div style="left:50.00px;top:369.10px;width:3.00px;height:1.20px;background:#2f8fd0;"></div>
<span id="t117" style="left:55.60px;top:365px;font-size:5.2px;line-height:8px;color:#f0f0f0;font-weight:bold;letter-spacing:-0.069px;">main frame</span>
<div style="left:119.20px;top:370.07px;width:3.60px;height:0.70px;background:#d6d6d6;"></div>
<div style="left:119.9px;top:367.97px;width:0;height:0;border-left:1.1px solid transparent;border-right:1.1px solid transparent;border-bottom:1.8px solid #d6d6d6;"></div>
<div style="left:131.20px;top:368.57px;width:6.00px;height:0.80px;background:#e4e4e4;transform:rotate(-48deg);"></div>
<div style="left:151.00px;top:366.50px;width:4.80px;height:4.80px;background:#454545;box-shadow:inset 0 0 0 0.4px #3a3a3a;"></div>
<div style="left:157.20px;top:366.50px;width:4.80px;height:4.80px;background:#454545;box-shadow:inset 0 0 0 0.4px #3a3a3a;"></div>
<div style="left:163.40px;top:366.50px;width:4.80px;height:4.80px;background:#454545;box-shadow:inset 0 0 0 0.4px #3a3a3a;"></div>
<div style="left:177.2px;top:367.07px;width:3.4px;height:3.4px;border-radius:50%;border:0.7px solid #9c9c9c;box-sizing:border-box;"></div>
<div style="left:178.60px;top:368.37px;width:2.60px;height:0.70px;background:#9c9c9c;"></div>
<div style="left:185.20px;top:366.20px;width:35.20px;height:5.40px;background:#4a4a4a;border-radius:0.8px;box-shadow:0 0 0 0.4px #2b2b2b;"></div>
<span id="t118" style="left:187.60px;top:366px;font-size:4.7px;line-height:8px;color:#d6d6d6;font-weight:normal;letter-spacing:-0.055px;">None</span>
<div style="left:215.60px;top:368.17px;width:3.00px;height:1.88px;background:#e0e0e0;clip-path:polygon(0 0,100% 0,50% 100%);"></div>
<div style="left:172.60px;top:293.90px;width:0.50px;height:78.54px;background:rgba(0,0,0,.25);"></div>
<div style="left:227.00px;top:293.90px;width:0.50px;height:78.54px;background:rgba(0,0,0,.25);"></div>
<div style="left:0.00px;top:398.80px;width:230.00px;height:7.20px;background:#383838;"></div>
<div style="left:0.00px;top:398.60px;width:230.00px;height:0.50px;background:#4a4a4a;"></div>
<div style="left:-1.2px;top:400.6px;width:3.6px;height:3.6px;border-radius:50%;border:0.7px solid #c8c8c8;box-sizing:border-box;"></div>
<div style="left:5.4px;top:400.4px;width:4.2px;height:4.2px;border-radius:50%;border:0.7px solid #c8c8c8;box-sizing:border-box;"></div>
<div style="left:7.00px;top:402.00px;width:2.40px;height:2.40px;background:#c8c8c8;border-radius:50%;"></div>
<span id="t119" style="left:12.60px;top:399px;font-size:4.6px;line-height:8px;color:#d0d0d0;font-weight:bold;">{}</span>
<div style="left:118.70px;top:400.40px;width:54.60px;height:5.60px;background:#535353;border-radius:0.8px 0.8px 0 0;box-shadow:0 0 0 0.4px #2a2a2a;"></div>
<span id="t120" style="left:121.40px;top:400px;font-size:4.2px;line-height:8px;color:#e4e4e4;font-weight:normal;letter-spacing:0.126px;">Toggle Switches / Modes</span>
<div style="left:230.00px;top:270.70px;width:0.80px;height:135.30px;background:#262626;"></div>
<div style="left:230.80px;top:270.70px;width:482.40px;height:135.30px;background:#3a3a3a;"></div>
<div style="left:230.80px;top:270.70px;width:475.40px;height:6.40px;background:#2e2e2e;"></div>
<div style="left:233.40px;top:273.00px;width:470.80px;height:3.50px;background:#8b8b8b;border-radius:0.5px;background:linear-gradient(180deg,#969696,#828282);"></div>
<div style="left:230.90px;top:272.80px;width:2.40px;height:3.90px;background:#e0b020;border-radius:0.8px 0 0 0.8px;"></div>
<div style="left:704.00px;top:272.60px;width:2.00px;height:4.20px;background:#e0b020;border-radius:0 0.8px 0.8px 0;"></div>
<div style="left:230.80px;top:276.80px;width:475.70px;height:8.00px;background:#3b3b3b;"></div>
<div style="left:230.80px;top:284.80px;width:475.70px;height:7.00px;background:#313131;"></div>
<span id="t121" style="left:231.00px;top:277px;font-size:3.7px;line-height:8px;color:#dcdcdc;font-weight:normal;letter-spacing:-0.125px;">0:00s</span>
<div style="left:233px;top:283.00px;width:1px;height:4.00px;background:rgba(225,225,225,0.480);"></div>
<span id="t122" style="left:229.58px;width:100px;text-align:center;top:277px;font-size:3.7px;line-height:8px;color:#dcdcdc;font-weight:normal;">01s</span>
<div style="left:279px;top:283.00px;width:1px;height:4.00px;background:rgba(225,225,225,0.336);"></div>
<div style="left:280px;top:283.00px;width:1px;height:4.00px;background:rgba(225,225,225,0.144);"></div>
<span id="t123" style="left:276.06px;width:100px;text-align:center;top:277px;font-size:3.7px;line-height:8px;color:#dcdcdc;font-weight:normal;">02s</span>
<div style="left:326px;top:283.00px;width:1px;height:4.00px;background:rgba(225,225,225,0.480);"></div>
<span id="t124" style="left:322.54px;width:100px;text-align:center;top:277px;font-size:3.7px;line-height:8px;color:#dcdcdc;font-weight:normal;">03s</span>
<div style="left:372px;top:283.00px;width:1px;height:4.00px;background:rgba(225,225,225,0.368);"></div>
<div style="left:373px;top:283.00px;width:1px;height:4.00px;background:rgba(225,225,225,0.112);"></div>
<span id="t125" style="left:369.02px;width:100px;text-align:center;top:277px;font-size:3.7px;line-height:8px;color:#dcdcdc;font-weight:normal;">04s</span>
<div style="left:419px;top:283.00px;width:1px;height:4.00px;background:rgba(225,225,225,0.480);"></div>
<span id="t126" style="left:415.50px;width:100px;text-align:center;top:277px;font-size:3.7px;line-height:8px;color:#dcdcdc;font-weight:normal;">05s</span>
<div style="left:465px;top:283.00px;width:1px;height:4.00px;background:rgba(225,225,225,0.400);"></div>
<div style="left:466px;top:283.00px;width:1px;height:4.00px;background:rgba(225,225,225,0.080);"></div>
<span id="t127" style="left:461.98px;width:100px;text-align:center;top:277px;font-size:3.7px;line-height:8px;color:#dcdcdc;font-weight:normal;">06s</span>
<div style="left:511px;top:283.00px;width:1px;height:4.00px;background:rgba(225,225,225,0.016);"></div>
<div style="left:512px;top:283.00px;width:1px;height:4.00px;background:rgba(225,225,225,0.464);"></div>
<span id="t128" style="left:508.46px;width:100px;text-align:center;top:277px;font-size:3.7px;line-height:8px;color:#dcdcdc;font-weight:normal;">07s</span>
<div style="left:558px;top:283.00px;width:1px;height:4.00px;background:rgba(225,225,225,0.432);"></div>
<div style="left:559px;top:283.00px;width:1px;height:4.00px;background:rgba(225,225,225,0.048);"></div>
<span id="t129" style="left:554.94px;width:100px;text-align:center;top:277px;font-size:3.7px;line-height:8px;color:#dcdcdc;font-weight:normal;">08s</span>
<div style="left:604px;top:283.00px;width:1px;height:4.00px;background:rgba(225,225,225,0.048);"></div>
<div style="left:605px;top:283.00px;width:1px;height:4.00px;background:rgba(225,225,225,0.432);"></div>
<span id="t130" style="left:601.42px;width:100px;text-align:center;top:277px;font-size:3.7px;line-height:8px;color:#dcdcdc;font-weight:normal;">09s</span>
<div style="left:651px;top:283.00px;width:1px;height:4.00px;background:rgba(225,225,225,0.464);"></div>
<div style="left:652px;top:283.00px;width:1px;height:4.00px;background:rgba(225,225,225,0.016);"></div>
<span id="t131" style="left:647.90px;width:100px;text-align:center;top:277px;font-size:3.7px;line-height:8px;color:#dcdcdc;font-weight:normal;">10s</span>
<div style="left:697px;top:283.00px;width:1px;height:4.00px;background:rgba(225,225,225,0.080);"></div>
<div style="left:698px;top:283.00px;width:1px;height:4.00px;background:rgba(225,225,225,0.400);"></div>
<div style="left:233.40px;top:285.20px;width:141.30px;height:6.50px;background:#8e8e8e;background:linear-gradient(180deg,#979797,#888888);"></div>
<div style="left:230.90px;top:285.00px;width:2.40px;height:7.00px;background:#d6a010;border-radius:0.8px 0 0 0.8px;background:linear-gradient(180deg,#e8b828,#c08a08);"></div>
<div style="left:375.10px;top:285.00px;width:2.30px;height:7.00px;background:#d6a010;border-radius:0 0.8px 0.8px 0;background:linear-gradient(180deg,#e8b828,#c08a08);"></div>
<div style="left:231.80px;top:287.00px;width:0.70px;height:3.00px;background:#7a5a08;"></div>
<div style="left:375.90px;top:287.00px;width:0.70px;height:3.00px;background:#7a5a08;"></div>
<div style="left:230.80px;top:291.80px;width:473.40px;height:2.20px;background:#262626;"></div>
<div style="left:328.22px;top:292.00px;width:375.38px;height:1.90px;background:#12a82a;"></div>
<div style="left:230.80px;top:294.00px;width:473.40px;height:104.60px;background:#3a3a3a;"></div>
<div style="left:233.40px;top:294.00px;width:141.30px;height:104.60px;background:#4b4b4b;"></div>
<div style="left:233.40px;top:293.90px;width:141.30px;height:7.14px;background:#c0b08f;"></div>
<div style="left:374.70px;top:293.90px;width:328.70px;height:7.14px;background:#b5a687;"></div>
<div style="left:233.40px;top:300.00px;width:470.00px;height:1.00px;background:rgba(30,30,45,.22);"></div>
<div style="left:233.40px;top:301.04px;width:141.30px;height:7.14px;background:#8f7f64;"></div>
<div style="left:374.70px;top:301.04px;width:328.70px;height:7.14px;background:#86775f;"></div>
<div style="left:233.40px;top:307.00px;width:470.00px;height:1.00px;background:rgba(30,30,45,.22);"></div>
<div style="left:233.40px;top:308.18px;width:141.30px;height:7.14px;background:#8383a6;"></div>
<div style="left:374.70px;top:308.18px;width:328.70px;height:7.14px;background:#7b7b9f;"></div>
<div style="left:233.40px;top:314.00px;width:470.00px;height:1.00px;background:rgba(30,30,45,.22);"></div>
<div style="left:233.40px;top:315.32px;width:141.30px;height:7.14px;background:#8383a6;"></div>
<div style="left:374.70px;top:315.32px;width:328.70px;height:7.14px;background:#7b7b9f;"></div>
<div style="left:233.40px;top:321.00px;width:470.00px;height:1.00px;background:rgba(30,30,45,.22);"></div>
<div style="left:233.40px;top:322.46px;width:141.30px;height:7.14px;background:#8383a6;"></div>
<div style="left:374.70px;top:322.46px;width:328.70px;height:7.14px;background:#7b7b9f;"></div>
<div style="left:233.40px;top:329.00px;width:470.00px;height:1.00px;background:rgba(30,30,45,.22);"></div>
<div style="left:233.40px;top:329.60px;width:141.30px;height:7.14px;background:#8383a6;"></div>
<div style="left:374.70px;top:329.60px;width:328.70px;height:7.14px;background:#7b7b9f;"></div>
<div style="left:233.40px;top:336.00px;width:470.00px;height:1.00px;background:rgba(30,30,45,.22);"></div>
<div style="left:230.80px;top:336.74px;width:473.40px;height:7.14px;background:#3c3c3c;"></div>
<div style="left:233.40px;top:336.74px;width:141.30px;height:7.14px;background:#474747;"></div>
<div style="left:233.40px;top:343.88px;width:141.30px;height:7.14px;background:#8383a6;"></div>
<div style="left:374.70px;top:343.88px;width:328.70px;height:7.14px;background:#7b7b9f;"></div>
<div style="left:233.40px;top:350.00px;width:470.00px;height:1.00px;background:rgba(30,30,45,.22);"></div>
<div style="left:230.80px;top:351.02px;width:473.40px;height:7.14px;background:#3c3c3c;"></div>
<div style="left:233.40px;top:351.02px;width:141.30px;height:7.14px;background:#474747;"></div>
<div style="left:233.40px;top:358.16px;width:141.30px;height:7.14px;background:#8383a6;"></div>
<div style="left:374.70px;top:358.16px;width:328.70px;height:7.14px;background:#7b7b9f;"></div>
<div style="left:233.40px;top:364.00px;width:470.00px;height:1.00px;background:rgba(30,30,45,.22);"></div>
<div style="left:233.40px;top:365.30px;width:141.30px;height:7.14px;background:#8383a6;"></div>
<div style="left:374.70px;top:365.30px;width:328.70px;height:7.14px;background:#7b7b9f;"></div>
<div style="left:233.40px;top:371.00px;width:470.00px;height:1.00px;background:rgba(30,30,45,.22);"></div>
<div style="left:230.80px;top:294.00px;width:2.60px;height:104.60px;background:#2f2f2f;"></div>
<div style="left:327.22px;top:338.11px;width:2.00px;height:0.70px;background:#dcdcdc;"></div>
<div style="left:327.87px;top:338.11px;width:0.70px;height:4.40px;background:#dcdcdc;"></div>
<div style="left:327.22px;top:341.81px;width:2.00px;height:0.70px;background:#dcdcdc;"></div>
<div style="left:327.22px;top:352.39px;width:2.00px;height:0.70px;background:#dcdcdc;"></div>
<div style="left:327.87px;top:352.39px;width:0.70px;height:4.40px;background:#dcdcdc;"></div>
<div style="left:327.22px;top:356.09px;width:2.00px;height:0.70px;background:#dcdcdc;"></div>
<div style="left:257.00px;top:352.39px;width:2.00px;height:0.70px;background:#dcdcdc;"></div>
<div style="left:257.65px;top:352.39px;width:0.70px;height:4.40px;background:#dcdcdc;"></div>
<div style="left:257.00px;top:356.09px;width:2.00px;height:0.70px;background:#dcdcdc;"></div>
<div style="left:327px;top:272.60px;width:1px;height:126.00px;background:rgba(214,50,40,0.172);"></div>
<div style="left:328px;top:272.60px;width:1px;height:126.00px;background:rgba(214,50,40,0.588);"></div>
<div style="left:325.62px;top:279.0px;width:5.2px;height:5.4px;background:#e8b81c;clip-path:polygon(0 0,100% 0,100% 60%,50% 100%,0 60%);"></div>
<div style="left:327.72px;top:280.40px;width:1.00px;height:2.40px;background:#6a4c08;"></div>
<div style="left:230.80px;top:398.60px;width:482.40px;height:7.40px;background:#383838;"></div>
<div style="left:230.80px;top:398.40px;width:482.40px;height:0.50px;background:#4a4a4a;"></div>
<div style="left:233.4px;top:403.2px;width:0;height:0;border-left:1.6px solid transparent;border-right:1.6px solid transparent;border-bottom:1.6px solid #bbb;"></div>
<div style="left:243.60px;top:402.60px;width:18.40px;height:2.00px;background:#1e1e1e;border-radius:1px;"></div>
<div style="left:243.00px;top:401.80px;width:1.80px;height:3.40px;background:#c8c8c8;border-radius:0.6px;"></div>
<div style="left:267.0px;top:401.2px;width:0;height:0;border-left:4px solid transparent;border-right:4px solid transparent;border-bottom:3.8px solid #c4c4c4;"></div>
<div style="left:278.40px;top:401.80px;width:1.89px;height:2.80px;background:#999;clip-path:polygon(100% 0,0 50%,100% 100%);"></div>
<div style="left:700.40px;top:401.80px;width:1.89px;height:2.80px;background:#999;clip-path:polygon(0 0,100% 50%,0 100%);"></div>
<div style="left:706.50px;top:277.00px;width:6.70px;height:129.00px;background:#3a3a3a;"></div>
<div style="left:703.60px;top:294.00px;width:2.90px;height:104.60px;background:#2c2c2c;"></div>
<div style="left:706.2px;top:285.6px;width:5.0px;height:4.4px;border:0.7px solid #d0d0d0;box-sizing:border-box;border-radius:0 0 2px 2px;"></div>
<div style="left:705.60px;top:294.60px;width:6.40px;height:5.60px;background:#262626;"></div>
<div style="left:706.6px;top:295.6px;width:4.4px;height:3.8px;border:0.7px solid #d8d8d8;box-sizing:border-box;"></div>
<div style="left:706.90px;top:302.40px;width:3.80px;height:2.56px;background:#8a8a8a;clip-path:polygon(0 100%,100% 100%,50% 0);"></div>
<div style="left:706.90px;top:393.20px;width:3.80px;height:2.56px;background:#8a8a8a;clip-path:polygon(0 0,100% 0,50% 100%);"></div>
<div style="left:347.6px;top:390.6px;width:9.0px;height:9.2px;background:rgba(150,150,150,.85);clip-path:polygon(50% 0,96% 24%,96% 76%,50% 100%,4% 76%,4% 24%);"></div>
<span id="t132" style="left:349.20px;top:392px;font-size:4.8px;line-height:8px;color:#3e3e3e;font-weight:bold;letter-spacing:0.494px;">UI</span>
<span id="t133" style="left:358.80px;top:392px;font-size:4.8px;line-height:8px;color:rgba(165,165,165,.9);font-weight:normal;letter-spacing:0.361px;">cn</span>
<div style="left:713px;top:270.00px;width:1px;height:136.00px;background:rgba(160,118,28,0.900);"></div>
</div></body></html>
